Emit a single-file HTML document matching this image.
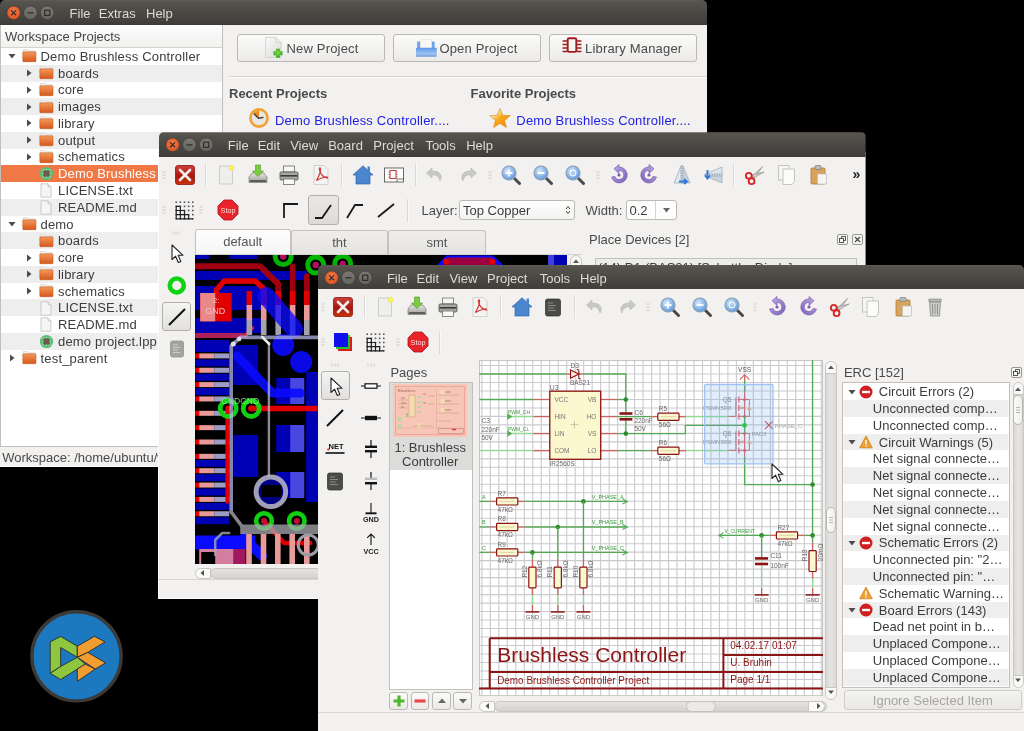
<!DOCTYPE html><html><head><meta charset="utf-8"><style>body{margin:0;width:1024px;height:731px;background:#000;overflow:hidden;position:relative;will-change:transform;font-family:"Liberation Sans",sans-serif}.r{position:absolute}.t{position:absolute;white-space:nowrap}.win{position:absolute;left:0;top:0;width:1024px;height:731px}.tb{background:linear-gradient(#5e5b53 0px,#55534c 2px,#4b4944 12px,#403f3b 23px,#3a3935 24.5px)}</style></head><body><svg class="r" style="left:28px;top:608px" width="97" height="97" viewBox="28 608 97 97"><circle cx="76.5" cy="656.3" r="44.6" fill="#1c79c0" stroke="#3c3a37" stroke-width="3.4"/><path d="M50.2 641.9 L60.7 636.4 L77.3 646.2 L77.3 657.3 L60.7 647.5 L60.7 666.5 L50.2 673.3z" fill="#8dc63f" stroke="#2a2a2a" stroke-width="0.9" stroke-linejoin="round"/><path d="M50.2 673.3 L60.7 666.5 L77.3 657.3 L85.3 664.1 L60.7 679.5z" fill="#8dc63f" stroke="#2a2a2a" stroke-width="0.9" stroke-linejoin="round"/><path d="M77.3 646.2 L94.5 636.4 L105 641.9 L87.8 652.4 L77.3 657.3z" fill="#f29d32" stroke="#2a2a2a" stroke-width="0.9" stroke-linejoin="round"/><path d="M77.3 657.3 L87.8 652.4 L105.6 662.9 L95.2 669 z" fill="#f29d32" stroke="#2a2a2a" stroke-width="0.9" stroke-linejoin="round"/><path d="M85.3 664.1 L95.2 669 L77.3 681.3 L77.3 669z" fill="#f29d32" stroke="#2a2a2a" stroke-width="0.9" stroke-linejoin="round"/></svg><div class="win" style="clip-path:inset(0px 317px 264px 0px);"><div class="r" style="left:0.00px;top:20.00px;width:707.00px;height:447.00px;background:#f2f1f0;"></div><div class="r" style="left:0.00px;top:466.00px;width:707.00px;height:1.00px;background:#fdfdfd;"></div><div class="r tb" style="left:0px;top:0px;width:707px;height:24.5px;border-radius:5px 5px 0 0"></div><svg class="r" style="left:0px;top:0px" width="60" height="25" viewBox="0 0 60 25"><defs><radialGradient id="cg" cx="50%" cy="40%" r="60%"><stop offset="0" stop-color="#f37c4f"/><stop offset="1" stop-color="#d9531e"/></radialGradient><linearGradient id="gg" x1="0" y1="0" x2="0" y2="1"><stop offset="0" stop-color="#7b7973"/><stop offset="1" stop-color="#65635d"/></linearGradient></defs><circle cx="13.6" cy="12.8" r="6.8" fill="url(#cg)" stroke="#3a3935" stroke-width="0.6"/><path d="M11.2 10.4 L16 15.2 M16 10.4 L11.2 15.2" stroke="#3b2a22" stroke-width="1.3"/><circle cx="30.4" cy="12.8" r="6.8" fill="url(#gg)" stroke="#3a3935" stroke-width="0.6"/><path d="M27.4 12.8 H33.4" stroke="#2f2e2b" stroke-width="1.3"/><circle cx="47.2" cy="12.8" r="6.8" fill="url(#gg)" stroke="#3a3935" stroke-width="0.6"/><rect x="44.6" y="10.2" width="5.2" height="5.2" fill="none" stroke="#2f2e2b" stroke-width="1.2"/></svg><div class="t" style="left:69.60px;top:6.60px;font-size:13px;line-height:13px;color:#dfdbd2;">File</div><div class="t" style="left:98.80px;top:6.60px;font-size:13px;line-height:13px;color:#dfdbd2;">Extras</div><div class="t" style="left:146.00px;top:6.60px;font-size:13px;line-height:13px;color:#dfdbd2;">Help</div><div class="r" style="left:0.00px;top:24.50px;width:223.00px;height:422.00px;background:#ffffff;box-sizing:border-box;border:1px solid #c3c0bb;border-top:none;"></div><div class="r" style="left:1.00px;top:25.00px;width:221.00px;height:22.00px;background:linear-gradient(#fdfdfd,#f1f1f0);border-bottom:1px solid #d5d3cf;"></div><div class="t" style="left:5.00px;top:30.00px;font-size:13px;line-height:13px;color:#454545;">Workspace Projects</div><svg class="r" style="left:6.5px;top:51.4px" width="10" height="10" viewBox="0 0 10 10"><path d="M1.5 3 H8.5 L5 7.5z" fill="#4c4c4c"/></svg><svg class="r" style="left:21.6px;top:49.4px" width="15" height="14" viewBox="0 0 15 14"><defs><linearGradient id="fo" x1="0" y1="0" x2="0" y2="1"><stop offset="0" stop-color="#f39a58"/><stop offset="1" stop-color="#d8561c"/></linearGradient></defs><path d="M1.2 0.6 h5 l1 1.2 h5.8 v3 H1.2z" fill="#f6f5f2" stroke="#cfcbc3" stroke-width="0.6"/><rect x="0.8" y="2.8" width="13.2" height="9.9" rx="0.7" fill="url(#fo)" stroke="#b9501d" stroke-width="0.5"/></svg><div class="t" style="left:40.50px;top:49.90px;font-size:13px;line-height:13px;color:#3c3c3c;letter-spacing:0.18px;">Demo Brushless Controller</div><div class="r" style="left:1.00px;top:64.76px;width:221.00px;height:16.76px;background:#eeeeee;"></div><svg class="r" style="left:24.0px;top:68.2px" width="10" height="10" viewBox="0 0 10 10"><path d="M3 1.5 V8.5 L7.5 5z" fill="#4c4c4c"/></svg><svg class="r" style="left:39.1px;top:66.2px" width="15" height="14" viewBox="0 0 15 14"><defs><linearGradient id="fo" x1="0" y1="0" x2="0" y2="1"><stop offset="0" stop-color="#f39a58"/><stop offset="1" stop-color="#d8561c"/></linearGradient></defs><path d="M1.2 0.6 h5 l1 1.2 h5.8 v3 H1.2z" fill="#f6f5f2" stroke="#cfcbc3" stroke-width="0.6"/><rect x="0.8" y="2.8" width="13.2" height="9.9" rx="0.7" fill="url(#fo)" stroke="#b9501d" stroke-width="0.5"/></svg><div class="t" style="left:58.00px;top:66.66px;font-size:13px;line-height:13px;color:#3c3c3c;letter-spacing:0.18px;">boards</div><svg class="r" style="left:24.0px;top:84.9px" width="10" height="10" viewBox="0 0 10 10"><path d="M3 1.5 V8.5 L7.5 5z" fill="#4c4c4c"/></svg><svg class="r" style="left:39.1px;top:82.9px" width="15" height="14" viewBox="0 0 15 14"><defs><linearGradient id="fo" x1="0" y1="0" x2="0" y2="1"><stop offset="0" stop-color="#f39a58"/><stop offset="1" stop-color="#d8561c"/></linearGradient></defs><path d="M1.2 0.6 h5 l1 1.2 h5.8 v3 H1.2z" fill="#f6f5f2" stroke="#cfcbc3" stroke-width="0.6"/><rect x="0.8" y="2.8" width="13.2" height="9.9" rx="0.7" fill="url(#fo)" stroke="#b9501d" stroke-width="0.5"/></svg><div class="t" style="left:58.00px;top:83.42px;font-size:13px;line-height:13px;color:#3c3c3c;letter-spacing:0.18px;">core</div><div class="r" style="left:1.00px;top:98.28px;width:221.00px;height:16.76px;background:#eeeeee;"></div><svg class="r" style="left:24.0px;top:101.7px" width="10" height="10" viewBox="0 0 10 10"><path d="M3 1.5 V8.5 L7.5 5z" fill="#4c4c4c"/></svg><svg class="r" style="left:39.1px;top:99.7px" width="15" height="14" viewBox="0 0 15 14"><defs><linearGradient id="fo" x1="0" y1="0" x2="0" y2="1"><stop offset="0" stop-color="#f39a58"/><stop offset="1" stop-color="#d8561c"/></linearGradient></defs><path d="M1.2 0.6 h5 l1 1.2 h5.8 v3 H1.2z" fill="#f6f5f2" stroke="#cfcbc3" stroke-width="0.6"/><rect x="0.8" y="2.8" width="13.2" height="9.9" rx="0.7" fill="url(#fo)" stroke="#b9501d" stroke-width="0.5"/></svg><div class="t" style="left:58.00px;top:100.18px;font-size:13px;line-height:13px;color:#3c3c3c;letter-spacing:0.18px;">images</div><svg class="r" style="left:24.0px;top:118.4px" width="10" height="10" viewBox="0 0 10 10"><path d="M3 1.5 V8.5 L7.5 5z" fill="#4c4c4c"/></svg><svg class="r" style="left:39.1px;top:116.4px" width="15" height="14" viewBox="0 0 15 14"><defs><linearGradient id="fo" x1="0" y1="0" x2="0" y2="1"><stop offset="0" stop-color="#f39a58"/><stop offset="1" stop-color="#d8561c"/></linearGradient></defs><path d="M1.2 0.6 h5 l1 1.2 h5.8 v3 H1.2z" fill="#f6f5f2" stroke="#cfcbc3" stroke-width="0.6"/><rect x="0.8" y="2.8" width="13.2" height="9.9" rx="0.7" fill="url(#fo)" stroke="#b9501d" stroke-width="0.5"/></svg><div class="t" style="left:58.00px;top:116.94px;font-size:13px;line-height:13px;color:#3c3c3c;letter-spacing:0.18px;">library</div><div class="r" style="left:1.00px;top:131.80px;width:221.00px;height:16.76px;background:#eeeeee;"></div><svg class="r" style="left:24.0px;top:135.2px" width="10" height="10" viewBox="0 0 10 10"><path d="M3 1.5 V8.5 L7.5 5z" fill="#4c4c4c"/></svg><svg class="r" style="left:39.1px;top:133.2px" width="15" height="14" viewBox="0 0 15 14"><defs><linearGradient id="fo" x1="0" y1="0" x2="0" y2="1"><stop offset="0" stop-color="#f39a58"/><stop offset="1" stop-color="#d8561c"/></linearGradient></defs><path d="M1.2 0.6 h5 l1 1.2 h5.8 v3 H1.2z" fill="#f6f5f2" stroke="#cfcbc3" stroke-width="0.6"/><rect x="0.8" y="2.8" width="13.2" height="9.9" rx="0.7" fill="url(#fo)" stroke="#b9501d" stroke-width="0.5"/></svg><div class="t" style="left:58.00px;top:133.70px;font-size:13px;line-height:13px;color:#3c3c3c;letter-spacing:0.18px;">output</div><svg class="r" style="left:24.0px;top:152.0px" width="10" height="10" viewBox="0 0 10 10"><path d="M3 1.5 V8.5 L7.5 5z" fill="#4c4c4c"/></svg><svg class="r" style="left:39.1px;top:150.0px" width="15" height="14" viewBox="0 0 15 14"><defs><linearGradient id="fo" x1="0" y1="0" x2="0" y2="1"><stop offset="0" stop-color="#f39a58"/><stop offset="1" stop-color="#d8561c"/></linearGradient></defs><path d="M1.2 0.6 h5 l1 1.2 h5.8 v3 H1.2z" fill="#f6f5f2" stroke="#cfcbc3" stroke-width="0.6"/><rect x="0.8" y="2.8" width="13.2" height="9.9" rx="0.7" fill="url(#fo)" stroke="#b9501d" stroke-width="0.5"/></svg><div class="t" style="left:58.00px;top:150.46px;font-size:13px;line-height:13px;color:#3c3c3c;letter-spacing:0.18px;">schematics</div><div class="r" style="left:1.00px;top:165.32px;width:221.00px;height:16.76px;background:#f07746;"></div><svg class="r" style="left:38.8px;top:166.2px" width="15" height="15" viewBox="0 0 15 15"><circle cx="7.5" cy="7.5" r="6.6" fill="#55bf72"/><rect x="4.3" y="4.3" width="6.4" height="6.4" fill="#6e5a4e"/><path d="M4.8 3 v1.3 M7.5 3 v1.3 M10.2 3 v1.3 M4.8 10.7 v1.3 M7.5 10.7 v1.3 M10.2 10.7 v1.3 M3 4.8 h1.3 M3 7.5 h1.3 M3 10.2 h1.3 M10.7 4.8 h1.3 M10.7 7.5 h1.3 M10.7 10.2 h1.3" stroke="#bfe9cf" stroke-width="0.8"/></svg><div class="t" style="left:58.00px;top:167.22px;font-size:13px;line-height:13px;color:#ffffff;letter-spacing:0.18px;">Demo Brushless Controller.lpp</div><svg class="r" style="left:39.3px;top:183.3px" width="14" height="15" viewBox="0 0 14 15"><path d="M2 0.8 h7 l3 3 v10.4 H2z" fill="#f5f5f4" stroke="#b9b7b2" stroke-width="0.7"/><path d="M9 0.8 v3 h3" fill="#e4e3e0" stroke="#b9b7b2" stroke-width="0.6"/></svg><div class="t" style="left:58.00px;top:183.98px;font-size:13px;line-height:13px;color:#3c3c3c;letter-spacing:0.18px;">LICENSE.txt</div><div class="r" style="left:1.00px;top:198.84px;width:221.00px;height:16.76px;background:#eeeeee;"></div><svg class="r" style="left:39.3px;top:200.0px" width="14" height="15" viewBox="0 0 14 15"><path d="M2 0.8 h7 l3 3 v10.4 H2z" fill="#f5f5f4" stroke="#b9b7b2" stroke-width="0.7"/><path d="M9 0.8 v3 h3" fill="#e4e3e0" stroke="#b9b7b2" stroke-width="0.6"/></svg><div class="t" style="left:58.00px;top:200.74px;font-size:13px;line-height:13px;color:#3c3c3c;letter-spacing:0.18px;">README.md</div><svg class="r" style="left:6.5px;top:219.0px" width="10" height="10" viewBox="0 0 10 10"><path d="M1.5 3 H8.5 L5 7.5z" fill="#4c4c4c"/></svg><svg class="r" style="left:21.6px;top:217.0px" width="15" height="14" viewBox="0 0 15 14"><defs><linearGradient id="fo" x1="0" y1="0" x2="0" y2="1"><stop offset="0" stop-color="#f39a58"/><stop offset="1" stop-color="#d8561c"/></linearGradient></defs><path d="M1.2 0.6 h5 l1 1.2 h5.8 v3 H1.2z" fill="#f6f5f2" stroke="#cfcbc3" stroke-width="0.6"/><rect x="0.8" y="2.8" width="13.2" height="9.9" rx="0.7" fill="url(#fo)" stroke="#b9501d" stroke-width="0.5"/></svg><div class="t" style="left:40.50px;top:217.50px;font-size:13px;line-height:13px;color:#3c3c3c;letter-spacing:0.18px;">demo</div><div class="r" style="left:1.00px;top:232.36px;width:221.00px;height:16.76px;background:#eeeeee;"></div><svg class="r" style="left:39.1px;top:233.8px" width="15" height="14" viewBox="0 0 15 14"><defs><linearGradient id="fo" x1="0" y1="0" x2="0" y2="1"><stop offset="0" stop-color="#f39a58"/><stop offset="1" stop-color="#d8561c"/></linearGradient></defs><path d="M1.2 0.6 h5 l1 1.2 h5.8 v3 H1.2z" fill="#f6f5f2" stroke="#cfcbc3" stroke-width="0.6"/><rect x="0.8" y="2.8" width="13.2" height="9.9" rx="0.7" fill="url(#fo)" stroke="#b9501d" stroke-width="0.5"/></svg><div class="t" style="left:58.00px;top:234.26px;font-size:13px;line-height:13px;color:#3c3c3c;letter-spacing:0.18px;">boards</div><svg class="r" style="left:24.0px;top:252.5px" width="10" height="10" viewBox="0 0 10 10"><path d="M3 1.5 V8.5 L7.5 5z" fill="#4c4c4c"/></svg><svg class="r" style="left:39.1px;top:250.5px" width="15" height="14" viewBox="0 0 15 14"><defs><linearGradient id="fo" x1="0" y1="0" x2="0" y2="1"><stop offset="0" stop-color="#f39a58"/><stop offset="1" stop-color="#d8561c"/></linearGradient></defs><path d="M1.2 0.6 h5 l1 1.2 h5.8 v3 H1.2z" fill="#f6f5f2" stroke="#cfcbc3" stroke-width="0.6"/><rect x="0.8" y="2.8" width="13.2" height="9.9" rx="0.7" fill="url(#fo)" stroke="#b9501d" stroke-width="0.5"/></svg><div class="t" style="left:58.00px;top:251.02px;font-size:13px;line-height:13px;color:#3c3c3c;letter-spacing:0.18px;">core</div><div class="r" style="left:1.00px;top:265.88px;width:221.00px;height:16.76px;background:#eeeeee;"></div><svg class="r" style="left:24.0px;top:269.3px" width="10" height="10" viewBox="0 0 10 10"><path d="M3 1.5 V8.5 L7.5 5z" fill="#4c4c4c"/></svg><svg class="r" style="left:39.1px;top:267.3px" width="15" height="14" viewBox="0 0 15 14"><defs><linearGradient id="fo" x1="0" y1="0" x2="0" y2="1"><stop offset="0" stop-color="#f39a58"/><stop offset="1" stop-color="#d8561c"/></linearGradient></defs><path d="M1.2 0.6 h5 l1 1.2 h5.8 v3 H1.2z" fill="#f6f5f2" stroke="#cfcbc3" stroke-width="0.6"/><rect x="0.8" y="2.8" width="13.2" height="9.9" rx="0.7" fill="url(#fo)" stroke="#b9501d" stroke-width="0.5"/></svg><div class="t" style="left:58.00px;top:267.78px;font-size:13px;line-height:13px;color:#3c3c3c;letter-spacing:0.18px;">library</div><svg class="r" style="left:24.0px;top:286.0px" width="10" height="10" viewBox="0 0 10 10"><path d="M3 1.5 V8.5 L7.5 5z" fill="#4c4c4c"/></svg><svg class="r" style="left:39.1px;top:284.0px" width="15" height="14" viewBox="0 0 15 14"><defs><linearGradient id="fo" x1="0" y1="0" x2="0" y2="1"><stop offset="0" stop-color="#f39a58"/><stop offset="1" stop-color="#d8561c"/></linearGradient></defs><path d="M1.2 0.6 h5 l1 1.2 h5.8 v3 H1.2z" fill="#f6f5f2" stroke="#cfcbc3" stroke-width="0.6"/><rect x="0.8" y="2.8" width="13.2" height="9.9" rx="0.7" fill="url(#fo)" stroke="#b9501d" stroke-width="0.5"/></svg><div class="t" style="left:58.00px;top:284.54px;font-size:13px;line-height:13px;color:#3c3c3c;letter-spacing:0.18px;">schematics</div><div class="r" style="left:1.00px;top:299.40px;width:221.00px;height:16.76px;background:#eeeeee;"></div><svg class="r" style="left:39.3px;top:300.6px" width="14" height="15" viewBox="0 0 14 15"><path d="M2 0.8 h7 l3 3 v10.4 H2z" fill="#f5f5f4" stroke="#b9b7b2" stroke-width="0.7"/><path d="M9 0.8 v3 h3" fill="#e4e3e0" stroke="#b9b7b2" stroke-width="0.6"/></svg><div class="t" style="left:58.00px;top:301.30px;font-size:13px;line-height:13px;color:#3c3c3c;letter-spacing:0.18px;">LICENSE.txt</div><svg class="r" style="left:39.3px;top:317.4px" width="14" height="15" viewBox="0 0 14 15"><path d="M2 0.8 h7 l3 3 v10.4 H2z" fill="#f5f5f4" stroke="#b9b7b2" stroke-width="0.7"/><path d="M9 0.8 v3 h3" fill="#e4e3e0" stroke="#b9b7b2" stroke-width="0.6"/></svg><div class="t" style="left:58.00px;top:318.06px;font-size:13px;line-height:13px;color:#3c3c3c;letter-spacing:0.18px;">README.md</div><div class="r" style="left:1.00px;top:332.92px;width:221.00px;height:16.76px;background:#eeeeee;"></div><svg class="r" style="left:38.8px;top:333.8px" width="15" height="15" viewBox="0 0 15 15"><circle cx="7.5" cy="7.5" r="6.6" fill="#55bf72"/><rect x="4.3" y="4.3" width="6.4" height="6.4" fill="#6e5a4e"/><path d="M4.8 3 v1.3 M7.5 3 v1.3 M10.2 3 v1.3 M4.8 10.7 v1.3 M7.5 10.7 v1.3 M10.2 10.7 v1.3 M3 4.8 h1.3 M3 7.5 h1.3 M3 10.2 h1.3 M10.7 4.8 h1.3 M10.7 7.5 h1.3 M10.7 10.2 h1.3" stroke="#bfe9cf" stroke-width="0.8"/></svg><div class="t" style="left:58.00px;top:334.82px;font-size:13px;line-height:13px;color:#3c3c3c;letter-spacing:0.18px;">demo project.lpp</div><svg class="r" style="left:6.5px;top:353.1px" width="10" height="10" viewBox="0 0 10 10"><path d="M3 1.5 V8.5 L7.5 5z" fill="#4c4c4c"/></svg><svg class="r" style="left:21.6px;top:351.1px" width="15" height="14" viewBox="0 0 15 14"><defs><linearGradient id="fo" x1="0" y1="0" x2="0" y2="1"><stop offset="0" stop-color="#f39a58"/><stop offset="1" stop-color="#d8561c"/></linearGradient></defs><path d="M1.2 0.6 h5 l1 1.2 h5.8 v3 H1.2z" fill="#f6f5f2" stroke="#cfcbc3" stroke-width="0.6"/><rect x="0.8" y="2.8" width="13.2" height="9.9" rx="0.7" fill="url(#fo)" stroke="#b9501d" stroke-width="0.5"/></svg><div class="t" style="left:40.50px;top:351.58px;font-size:13px;line-height:13px;color:#3c3c3c;letter-spacing:0.18px;">test_parent</div><div class="t" style="left:2.20px;top:450.60px;font-size:13px;line-height:13px;color:#4a4a4a;">Workspace: /home/ubuntu/workspace</div><div class="r" style="left:237.30px;top:33.50px;width:146.20px;height:26.20px;border:1px solid #bcb9b3;border-radius:3px;background:linear-gradient(#fbfbfa,#ebeae8);"></div><div class="t" style="left:286.50px;top:42.10px;font-size:13px;line-height:13px;color:#4a4a4a;letter-spacing:0.18px;">New Project</div><div class="r" style="left:393.20px;top:33.50px;width:146.20px;height:26.20px;border:1px solid #bcb9b3;border-radius:3px;background:linear-gradient(#fbfbfa,#ebeae8);"></div><div class="t" style="left:439.40px;top:42.10px;font-size:13px;line-height:13px;color:#4a4a4a;letter-spacing:0.18px;">Open Project</div><div class="r" style="left:549.00px;top:33.50px;width:146.20px;height:26.20px;border:1px solid #bcb9b3;border-radius:3px;background:linear-gradient(#fbfbfa,#ebeae8);"></div><div class="t" style="left:585.00px;top:42.10px;font-size:13px;line-height:13px;color:#4a4a4a;letter-spacing:0.18px;">Library Manager</div><div class="r" style="left:229.00px;top:76.20px;width:478.00px;height:1.00px;background:#d4d2ce;"></div><div class="r" style="left:229.00px;top:77.20px;width:478.00px;height:1.00px;background:#fbfbfa;"></div><svg class="r" style="left:262.50px;top:33.80px" width="22" height="27" viewBox="0 0 22 27"><defs><linearGradient id="ic_np" x1="0" y1="0" x2="1" y2="1"><stop offset="0" stop-color="#fafafa"/><stop offset="1" stop-color="#d9d9d7"/></linearGradient><radialGradient id="ic_gp" cx="50%" cy="45%" r="55%"><stop offset="0" stop-color="#7ee050"/><stop offset="1" stop-color="#3aa51c"/></radialGradient></defs><path d="M2.6 3.4 H13 L18.1 8.4 V23.5 H2.6z" fill="url(#ic_np)" stroke="#c8c8c5" stroke-width="0.7"/><path d="M13 3.4 V8.4 H18.1" fill="#ececea" stroke="#c2c2bf" stroke-width="0.6"/><path d="M13 14.7 H17 V17.2 H19.5 V21.2 H17 V23.7 H13 V21.2 H10.5 V17.2 H13z" fill="url(#ic_gp)"/></svg><svg class="r" style="left:414.50px;top:36.80px" width="22" height="22" viewBox="0 0 22 22"><defs><linearGradient id="ic_op" x1="0" y1="0" x2="0" y2="1"><stop offset="0" stop-color="#5d98e8"/><stop offset="0.7" stop-color="#9cc4f4"/><stop offset="1" stop-color="#6a9ad8"/></linearGradient></defs><rect x="2.1" y="4.6" width="3.2" height="10" rx="1" fill="#6ea3ea"/><rect x="16.4" y="4.6" width="3.2" height="10" rx="1" fill="#6ea3ea"/><rect x="5.5" y="2.6" width="11" height="9" fill="#f7f7f6" stroke="#dedede" stroke-width="0.5"/><rect x="1" y="10.7" width="20.8" height="9" rx="1" fill="url(#ic_op)"/></svg><svg class="r" style="left:561.20px;top:36.20px" width="22" height="22" viewBox="0 0 22 22"><rect x="6.7" y="2.3" width="8.6" height="13.6" rx="1.3" fill="#f5f5f4" stroke="#a01c1c" stroke-width="1.9"/><path d="M1.5 5 H6 M1.5 8.5 H6 M1.5 12 H6 M1.5 15.4 H6 M16 5 H20.5 M16 8.5 H20.5 M16 12 H20.5 M16 15.4 H20.5" stroke="#a01c1c" stroke-width="1.5"/></svg><svg class="r" style="left:247.70px;top:107.40px" width="22" height="22" viewBox="0 0 22 22"><circle cx="11" cy="11" r="8.6" fill="#e7e7e3" stroke="#f2a235" stroke-width="2.6"/><path d="M11 11 L11 3.8 A7.2 7.2 0 0 0 5.6 6.1z" fill="#f58a1a"/><path d="M5.8 6.6 L10.5 11.3 L15.6 10.4" fill="none" stroke="#3e3e3c" stroke-width="1.4" stroke-linejoin="round"/></svg><svg class="r" style="left:489.40px;top:108.40px" width="22" height="22" viewBox="0 0 22 22"><defs><linearGradient id="ic_st" x1="0.2" y1="0.2" x2="0.8" y2="0.9"><stop offset="0" stop-color="#fff4c8"/><stop offset="0.45" stop-color="#f9a81a"/><stop offset="1" stop-color="#f08a10"/></linearGradient></defs><path d="M11 0.4 L13.9 7.3 L21.3 7.6 L15.6 12.4 L17.5 19.6 L11 15.5 L4.5 19.6 L6.4 12.4 L0.7 7.6 L8.1 7.3z" fill="url(#ic_st)" stroke="#d98b2a" stroke-width="0.6" stroke-linejoin="round"/></svg><div class="t" style="left:229.00px;top:86.60px;font-size:13px;line-height:13px;color:#4a4a4a;font-weight:bold;">Recent Projects</div><div class="t" style="left:470.60px;top:86.60px;font-size:13px;line-height:13px;color:#4a4a4a;font-weight:bold;">Favorite Projects</div><div class="t" style="left:275.00px;top:113.60px;font-size:13px;line-height:13px;color:#2121e6;letter-spacing:0.19px;">Demo Brushless Controller....</div><div class="t" style="left:516.30px;top:113.60px;font-size:13px;line-height:13px;color:#2121e6;letter-spacing:0.19px;">Demo Brushless Controller....</div></div><div class="win" style="clip-path:inset(132.2px 158.39999999999998px 132px 158px);"><div class="r" style="left:158.00px;top:152.20px;width:707.60px;height:446.80px;background:#f2f1f0;"></div><div class="r" style="left:158.00px;top:156.00px;width:1.00px;height:443.00px;background:#fdfdfd;"></div><div class="r" style="left:158.00px;top:598.00px;width:707.60px;height:1.00px;background:#fdfdfd;"></div><div class="r tb" style="left:159px;top:132.2px;width:706.6px;height:24.5px;border-radius:5px 5px 0 0"></div><svg class="r" style="left:159px;top:132.2px" width="60" height="25" viewBox="0 0 60 25"><defs><radialGradient id="cg" cx="50%" cy="40%" r="60%"><stop offset="0" stop-color="#f37c4f"/><stop offset="1" stop-color="#d9531e"/></radialGradient><linearGradient id="gg" x1="0" y1="0" x2="0" y2="1"><stop offset="0" stop-color="#7b7973"/><stop offset="1" stop-color="#65635d"/></linearGradient></defs><circle cx="13.6" cy="12.8" r="6.8" fill="url(#cg)" stroke="#3a3935" stroke-width="0.6"/><path d="M11.2 10.4 L16 15.2 M16 10.4 L11.2 15.2" stroke="#3b2a22" stroke-width="1.3"/><circle cx="30.4" cy="12.8" r="6.8" fill="url(#gg)" stroke="#3a3935" stroke-width="0.6"/><path d="M27.4 12.8 H33.4" stroke="#2f2e2b" stroke-width="1.3"/><circle cx="47.2" cy="12.8" r="6.8" fill="url(#gg)" stroke="#3a3935" stroke-width="0.6"/><rect x="44.6" y="10.2" width="5.2" height="5.2" fill="none" stroke="#2f2e2b" stroke-width="1.2"/></svg><div class="t" style="left:227.70px;top:138.80px;font-size:13px;line-height:13px;color:#dfdbd2;">File</div><div class="t" style="left:257.70px;top:138.80px;font-size:13px;line-height:13px;color:#dfdbd2;">Edit</div><div class="t" style="left:290.20px;top:138.80px;font-size:13px;line-height:13px;color:#dfdbd2;">View</div><div class="t" style="left:328.20px;top:138.80px;font-size:13px;line-height:13px;color:#dfdbd2;">Board</div><div class="t" style="left:373.30px;top:138.80px;font-size:13px;line-height:13px;color:#dfdbd2;">Project</div><div class="t" style="left:425.40px;top:138.80px;font-size:13px;line-height:13px;color:#dfdbd2;">Tools</div><div class="t" style="left:466.20px;top:138.80px;font-size:13px;line-height:13px;color:#dfdbd2;">Help</div><svg class="r" style="left:161.50px;top:169.50px" width="4" height="10"><path d="M0.5 2 H3.5 M0.5 5 H3.5 M0.5 8 H3.5" stroke="#c9c7c3" stroke-width="0.9"/></svg><svg class="r" style="left:173.60px;top:163.50px" width="22" height="22" viewBox="0 0 22 22"><defs><linearGradient id="ic_close" x1="0" y1="0" x2="0" y2="1"><stop offset="0" stop-color="#d0413c"/><stop offset="0.55" stop-color="#a8150f"/><stop offset="1" stop-color="#c8350a"/></linearGradient></defs><rect x="1.5" y="1.5" width="19" height="19" rx="2.5" fill="url(#ic_close)" stroke="#8a1410" stroke-width="0.8"/><path d="M6 6 L16 16 M16 6 L6 16" stroke="#f4f0ee" stroke-width="2.6" stroke-linecap="round"/></svg><div class="r" style="left:205.10px;top:163.00px;width:1px;height:23.00px;background:#dcdad6;box-shadow:1px 0 0 #fafaf9"></div><svg class="r" style="left:214.90px;top:163.50px" width="22" height="22" viewBox="0 0 22 22"><path d="M4.5 2 H15 L17.5 4.5 V20 H4.5z" fill="#eeeeec" stroke="#c4c4c0" stroke-width="0.8"/><circle cx="16.5" cy="3.8" r="2.6" fill="#f7f36a" stroke="#e8df3a" stroke-width="0.5"/></svg><svg class="r" style="left:247.00px;top:163.50px" width="22" height="22" viewBox="0 0 22 22"><defs><linearGradient id="ic_sv" x1="0" y1="0" x2="0" y2="1"><stop offset="0" stop-color="#e6e6e4"/><stop offset="1" stop-color="#9a9a96"/></linearGradient></defs><path d="M2 13 L5 9 H17 L20 13 V18.5 H2z" fill="url(#ic_sv)" stroke="#7b7b77" stroke-width="0.7"/><rect x="3" y="16" width="16" height="2" fill="#5d5d5a"/><path d="M8.5 1 H13.5 V7 H16.5 L11 12.5 L5.5 7 H8.5z" fill="#7cc943" stroke="#4e9a1f" stroke-width="0.6"/></svg><svg class="r" style="left:278.30px;top:163.50px" width="22" height="22" viewBox="0 0 22 22"><rect x="5.5" y="2" width="11" height="6" fill="#f6f6f5" stroke="#6e6e6b" stroke-width="0.8"/><rect x="2" y="8" width="18" height="8" rx="1.2" fill="#a7a7a4" stroke="#4d4d4a" stroke-width="0.8"/><rect x="2.5" y="11" width="17" height="1.6" fill="#3b3b39"/><rect x="5.5" y="15" width="11" height="5.5" fill="#f8f8f7" stroke="#6e6e6b" stroke-width="0.8"/></svg><svg class="r" style="left:310.00px;top:163.50px" width="22" height="22" viewBox="0 0 22 22"><path d="M4 1.5 H14 L18 5.5 V20.5 H4z" fill="#f3f3f2" stroke="#c9c9c6" stroke-width="0.8"/><path d="M6.5 16.5 C9 12 11 7 10.5 4.5 C10 3 9 4 9.5 6 C10.5 10 13 13 17 14 C18.5 14.3 17.5 12.8 16 13 C12 13.5 8 15.5 6.5 16.5z" fill="none" stroke="#d43b3b" stroke-width="1.2"/></svg><div class="r" style="left:341.10px;top:163.00px;width:1px;height:23.00px;background:#dcdad6;box-shadow:1px 0 0 #fafaf9"></div><svg class="r" style="left:351.60px;top:163.50px" width="22" height="22" viewBox="0 0 22 22"><path d="M11 1.8 L21 11 H18 V20 H4 V11 H1z" fill="#4a86cf" stroke="#2f66ad" stroke-width="0.7"/><rect x="15.5" y="2.5" width="2.5" height="5" fill="#4a86cf"/></svg><svg class="r" style="left:383.30px;top:163.50px" width="22" height="22" viewBox="0 0 22 22"><rect x="1.5" y="4" width="19" height="14" fill="#fdfdfd" stroke="#5b5b58" stroke-width="0.9"/><rect x="7" y="6.5" width="6" height="8" fill="none" stroke="#c23a3a" stroke-width="1"/><path d="M5.5 8h1.5M5.5 10.5h1.5M5.5 13h1.5M13 8h1.5M13 10.5h1.5M13 13h1.5" stroke="#c23a3a" stroke-width="0.8"/><path d="M14 18 V15 H20.5" fill="none" stroke="#5b5b58" stroke-width="0.8"/></svg><div class="r" style="left:415.40px;top:163.00px;width:1px;height:23.00px;background:#dcdad6;box-shadow:1px 0 0 #fafaf9"></div><svg class="r" style="left:424.40px;top:163.50px" width="22" height="22" viewBox="0 0 22 22"><path d="M8 4 L2.5 9 L8 14 V11 C12 10.5 15 12 16 17 C19 12 16.5 7 8 7z" fill="#c8c8c6" stroke="#b5b5b2" stroke-width="0.6"/></svg><svg class="r" style="left:456.90px;top:163.50px" width="22" height="22" viewBox="0 0 22 22"><path d="M14 4 L19.5 9 L14 14 V11 C10 10.5 7 12 6 17 C3 12 5.5 7 14 7z" fill="#c8c8c6" stroke="#b5b5b2" stroke-width="0.6"/></svg><svg class="r" style="left:488.00px;top:169.50px" width="4" height="10"><path d="M0.5 2 H3.5 M0.5 5 H3.5 M0.5 8 H3.5" stroke="#c9c7c3" stroke-width="0.9"/></svg><svg class="r" style="left:500.00px;top:163.50px" width="22" height="22" viewBox="0 0 22 22"><defs><radialGradient id="ic_zm" cx="40%" cy="35%" r="65%"><stop offset="0" stop-color="#d7e9fb"/><stop offset="1" stop-color="#5d9ae0"/></radialGradient></defs><path d="M13.5 13.5 L19.5 19.5" stroke="#4a4a48" stroke-width="3" stroke-linecap="round"/><circle cx="9" cy="9" r="7" fill="url(#ic_zm)" stroke="#8a9fb5" stroke-width="1.2"/><path d="M5.5 9 H12.5 M9 5.5 V12.5" stroke="#fff" stroke-width="1.8"/></svg><svg class="r" style="left:531.80px;top:163.50px" width="22" height="22" viewBox="0 0 22 22"><defs><radialGradient id="ic_zm" cx="40%" cy="35%" r="65%"><stop offset="0" stop-color="#d7e9fb"/><stop offset="1" stop-color="#5d9ae0"/></radialGradient></defs><path d="M13.5 13.5 L19.5 19.5" stroke="#4a4a48" stroke-width="3" stroke-linecap="round"/><circle cx="9" cy="9" r="7" fill="url(#ic_zm)" stroke="#8a9fb5" stroke-width="1.2"/><path d="M5.5 9 H12.5" stroke="#fff" stroke-width="1.8"/></svg><svg class="r" style="left:563.60px;top:163.50px" width="22" height="22" viewBox="0 0 22 22"><defs><radialGradient id="ic_zm" cx="40%" cy="35%" r="65%"><stop offset="0" stop-color="#d7e9fb"/><stop offset="1" stop-color="#5d9ae0"/></radialGradient></defs><path d="M13.5 13.5 L19.5 19.5" stroke="#4a4a48" stroke-width="3" stroke-linecap="round"/><circle cx="9" cy="9" r="7" fill="url(#ic_zm)" stroke="#8a9fb5" stroke-width="1.2"/><path d="M5.5 9 H12.5 M9 5.5 V12.5" stroke="#a9c8ec" stroke-width="1"/><circle cx="9" cy="9" r="3" fill="none" stroke="#fff" stroke-width="1"/></svg><svg class="r" style="left:595.80px;top:169.50px" width="4" height="10"><path d="M0.5 2 H3.5 M0.5 5 H3.5 M0.5 8 H3.5" stroke="#c9c7c3" stroke-width="0.9"/></svg><svg class="r" style="left:607.50px;top:163.50px" width="22" height="22" viewBox="0 0 22 22"><defs><linearGradient id="ic_rt" x1="0" y1="0" x2="1" y2="1"><stop offset="0" stop-color="#c2b0e6"/><stop offset="1" stop-color="#7a5fb8"/></linearGradient></defs><path d="M11 3 A8 8 0 1 1 3.5 13 L7 12.5 A4.5 4.5 0 1 0 11 6.5 V9.5 L6 4.8 L11 0.5z" fill="url(#ic_rt)" stroke="#6d56a8" stroke-width="0.6"/><circle cx="11" cy="11" r="1.6" fill="#7a5fb8"/></svg><svg class="r" style="left:637.80px;top:163.50px" width="22" height="22" viewBox="0 0 22 22"><defs><linearGradient id="ic_rt2" x1="1" y1="0" x2="0" y2="1"><stop offset="0" stop-color="#c2b0e6"/><stop offset="1" stop-color="#7a5fb8"/></linearGradient></defs><path d="M11 3 A8 8 0 1 0 18.5 13 L15 12.5 A4.5 4.5 0 1 1 11 6.5 V9.5 L16 4.8 L11 0.5z" fill="url(#ic_rt2)" stroke="#6d56a8" stroke-width="0.6"/><circle cx="11" cy="11" r="1.6" fill="#7a5fb8"/></svg><svg class="r" style="left:670.50px;top:163.50px" width="22" height="22" viewBox="0 0 22 22"><path d="M10 2 L3 19 H10z" fill="#dfe6ee" stroke="#9aa6b3" stroke-width="0.7"/><path d="M12 2 L19 19 H12z" fill="#c8d3df" stroke="#9aa6b3" stroke-width="0.7"/><path d="M11 1 V20" stroke="#5f7fa8" stroke-width="0.8" stroke-dasharray="1.5 1"/><path d="M8 17.5 H15 M13 15 L16 17.5 L13 20" stroke="#2f7ad6" stroke-width="1.8" fill="none"/></svg><svg class="r" style="left:702.50px;top:163.50px" width="22" height="22" viewBox="0 0 22 22"><path d="M2 10 L19 3 V10z" fill="#dfe6ee" stroke="#9aa6b3" stroke-width="0.7"/><path d="M2 12 L19 19 V12z" fill="#c8d3df" stroke="#9aa6b3" stroke-width="0.7"/><path d="M1 11 H21" stroke="#5f7fa8" stroke-width="0.8" stroke-dasharray="1.5 1"/><path d="M4.5 6 V14 M2 11.5 L4.5 14.5 L7 11.5" stroke="#2f7ad6" stroke-width="1.8" fill="none"/></svg><div class="r" style="left:733.00px;top:163.00px;width:1px;height:23.00px;background:#dcdad6;box-shadow:1px 0 0 #fafaf9"></div><svg class="r" style="left:743.30px;top:163.50px" width="22" height="22" viewBox="0 0 22 22"><path d="M8.5 13 L19.5 2.5 L11 14.5z" fill="#c9c9c6" stroke="#8c8c89" stroke-width="0.7"/><path d="M9.5 11 L21 8 L10.5 14z" fill="#d6d6d3" stroke="#8c8c89" stroke-width="0.7"/><circle cx="5.8" cy="11.8" r="2.9" fill="none" stroke="#d62828" stroke-width="1.9"/><circle cx="8.6" cy="17.2" r="2.9" fill="none" stroke="#d62828" stroke-width="1.9"/></svg><svg class="r" style="left:775.70px;top:163.50px" width="22" height="22" viewBox="0 0 22 22"><path d="M2.5 1.5 H13 V16 H2.5z" fill="#f5f5f4" stroke="#b8b8b5" stroke-width="0.8"/><path d="M7 5 H18.5 V17.5 L16 20.5 H7z" fill="#fbfbfa" stroke="#b8b8b5" stroke-width="0.8"/></svg><svg class="r" style="left:808.00px;top:163.50px" width="22" height="22" viewBox="0 0 22 22"><rect x="3" y="4" width="14" height="16" rx="1" fill="#d9a35b" stroke="#a9793a" stroke-width="0.8"/><rect x="7" y="1.5" width="6" height="4" rx="1" fill="#b9b9b6" stroke="#7c7c79" stroke-width="0.7"/><rect x="9.5" y="10" width="9" height="10" fill="#f4f4f3" stroke="#bdbdba" stroke-width="0.7"/></svg><div class="t" style="left:852.50px;top:167.15px;font-size:14px;line-height:14px;color:#222;font-weight:bold;">&#187;</div><svg class="r" style="left:161.50px;top:204.80px" width="4" height="10"><path d="M0.5 2 H3.5 M0.5 5 H3.5 M0.5 8 H3.5" stroke="#c9c7c3" stroke-width="0.9"/></svg><svg class="r" style="left:172.60px;top:198.80px" width="22" height="22" viewBox="0 0 22 22"><g fill="#555"><rect x="2.40" y="2.40" width="1.6" height="1.6"/><rect x="2.40" y="6.55" width="1.6" height="1.6"/><rect x="2.40" y="10.70" width="1.6" height="1.6"/><rect x="2.40" y="14.85" width="1.6" height="1.6"/><rect x="2.40" y="19.00" width="1.6" height="1.6"/><rect x="6.55" y="2.40" width="1.6" height="1.6"/><rect x="6.55" y="6.55" width="1.6" height="1.6"/><rect x="6.55" y="10.70" width="1.6" height="1.6"/><rect x="6.55" y="14.85" width="1.6" height="1.6"/><rect x="6.55" y="19.00" width="1.6" height="1.6"/><rect x="10.70" y="2.40" width="1.6" height="1.6"/><rect x="10.70" y="6.55" width="1.6" height="1.6"/><rect x="10.70" y="10.70" width="1.6" height="1.6"/><rect x="10.70" y="14.85" width="1.6" height="1.6"/><rect x="10.70" y="19.00" width="1.6" height="1.6"/><rect x="14.85" y="2.40" width="1.6" height="1.6"/><rect x="14.85" y="6.55" width="1.6" height="1.6"/><rect x="14.85" y="10.70" width="1.6" height="1.6"/><rect x="14.85" y="14.85" width="1.6" height="1.6"/><rect x="14.85" y="19.00" width="1.6" height="1.6"/><rect x="19.00" y="2.40" width="1.6" height="1.6"/><rect x="19.00" y="6.55" width="1.6" height="1.6"/><rect x="19.00" y="10.70" width="1.6" height="1.6"/><rect x="19.00" y="14.85" width="1.6" height="1.6"/><rect x="19.00" y="19.00" width="1.6" height="1.6"/></g><path d="M3.2 7.35 H7.35 M3.2 11.50 H11.50 M3.2 15.65 H15.65 M3.2 19.80 H19.80 M3.20 7.35 V19.80 M7.35 7.35 V19.80 M11.50 11.50 V19.80 M15.65 15.65 V19.80" stroke="#222" stroke-width="1.2"/></svg><svg class="r" style="left:199.00px;top:204.80px" width="4" height="10"><path d="M0.5 2 H3.5 M0.5 5 H3.5 M0.5 8 H3.5" stroke="#c9c7c3" stroke-width="0.9"/></svg><svg class="r" style="left:216.60px;top:198.80px" width="22" height="22" viewBox="0 0 22 22"><path d="M7 1 H15 L21 7 V15 L15 21 H7 L1 15 V7z" fill="#e8232a" stroke="#b51218" stroke-width="0.8"/><text x="11" y="13.8" font-family="Liberation Sans" font-size="7.2" fill="#fbe2e2" text-anchor="middle">Stop</text></svg><div class="r" style="left:308.00px;top:195.00px;width:28.50px;height:27.50px;border:1px solid #bcb9b3;border-radius:3px;background:linear-gradient(#fbfbfa,#ebeae8);background:linear-gradient(#e9e8e6,#dcdbd9);border-color:#b3b0aa;"></div><svg class="r" style="left:280.00px;top:198.80px" width="22" height="22" viewBox="0 0 22 22"><path d="M4 19 V5 H18" fill="none" stroke="#1a1a1a" stroke-width="1.8"/></svg><svg class="r" style="left:311.80px;top:198.80px" width="22" height="22" viewBox="0 0 22 22"><path d="M3 19 H10 L19 6" fill="none" stroke="#1a1a1a" stroke-width="1.8"/></svg><svg class="r" style="left:343.50px;top:198.80px" width="22" height="22" viewBox="0 0 22 22"><path d="M3 19 L11 6 H19" fill="none" stroke="#1a1a1a" stroke-width="1.8"/></svg><svg class="r" style="left:375.00px;top:198.80px" width="22" height="22" viewBox="0 0 22 22"><path d="M3 18 L19 5" fill="none" stroke="#1a1a1a" stroke-width="1.8"/></svg><div class="r" style="left:406.80px;top:199.00px;width:1px;height:23.00px;background:#dcdad6;box-shadow:1px 0 0 #fafaf9"></div><div class="t" style="left:421.50px;top:203.60px;font-size:13px;line-height:13px;color:#4a4a4a;">Layer:</div><div class="r" style="left:458.60px;top:200.00px;width:114.70px;height:17.80px;border:1px solid #bcb9b3;border-radius:3px;background:linear-gradient(#fbfbfa,#ebeae8);border-radius:3px;background:linear-gradient(#fefefe,#f3f3f2);"></div><div class="t" style="left:463.00px;top:203.60px;font-size:13px;line-height:13px;color:#3c3c3c;">Top Copper</div><svg class="r" style="left:563.50px;top:205.00px" width="8" height="10" viewBox="0 0 8 10"><path d="M2 4 L4 1.5 L6 4 M2 6 L4 8.5 L6 6" fill="none" stroke="#444" stroke-width="1"/></svg><div class="t" style="left:585.50px;top:203.60px;font-size:13px;line-height:13px;color:#4a4a4a;">Width:</div><div class="r" style="left:626.00px;top:200.00px;width:49.40px;height:17.80px;border:1px solid #bcb9b3;border-radius:3px;background:linear-gradient(#fbfbfa,#ebeae8);background:#fdfdfd;"></div><div class="r" style="left:655.00px;top:201.00px;width:1.00px;height:18.00px;background:#d5d3cf;"></div><div class="t" style="left:629.50px;top:203.60px;font-size:13px;line-height:13px;color:#3c3c3c;">0.2</div><svg class="r" style="left:661.50px;top:205.50px" width="9" height="9" viewBox="0 0 9 9"><path d="M1 2 H8 L4.5 6.5z" fill="#666"/></svg><div class="r" style="left:194.60px;top:228.60px;width:94.20px;height:26.20px;border:1px solid #c6c3be;border-bottom:none;border-radius:3px 3px 0 0;background:linear-gradient(#fdfdfd,#f5f5f4)"></div><div class="t" style="left:242.70px;top:235.10px;font-size:13px;line-height:13px;color:#555;transform:translateX(-50%);">default</div><div class="r" style="left:290.80px;top:229.60px;width:95.20px;height:25.20px;border:1px solid #c6c3be;border-bottom:none;border-radius:3px 3px 0 0;background:linear-gradient(#efeeed,#e3e2e0)"></div><div class="t" style="left:339.40px;top:236.10px;font-size:13px;line-height:13px;color:#555;transform:translateX(-50%);">tht</div><div class="r" style="left:388.00px;top:229.60px;width:96.00px;height:25.20px;border:1px solid #c6c3be;border-bottom:none;border-radius:3px 3px 0 0;background:linear-gradient(#efeeed,#e3e2e0)"></div><div class="t" style="left:437.00px;top:236.10px;font-size:13px;line-height:13px;color:#555;transform:translateX(-50%);">smt</div><svg class="r" style="left:171.00px;top:231.00px" width="10" height="4"><path d="M2 0.5 V3.5 M5 0.5 V3.5 M8 0.5 V3.5" stroke="#c9c7c3" stroke-width="0.9"/></svg><svg class="r" style="left:170.50px;top:244.00px" width="14.0" height="20.0" viewBox="0 0 14 20"><path d="M1 1 V15.5 L4.6 12.2 L7.3 18.5 L9.8 17.4 L7.2 11.3 H12z" fill="#fff" stroke="#222" stroke-width="1.1" stroke-linejoin="round"/></svg><svg class="r" style="left:166px;top:275px" width="22" height="22"><circle cx="10.8" cy="10.5" r="7" fill="none" stroke="#0fd40f" stroke-width="4.6"/></svg><div class="r" style="left:162.00px;top:302.40px;width:27.30px;height:26.80px;border:1px solid #bcb9b3;border-radius:3px;background:linear-gradient(#fbfbfa,#ebeae8);background:linear-gradient(#f4f4f3,#e1e0de);border-color:#b3b0aa;"></div><svg class="r" style="left:165.50px;top:306.00px" width="22" height="22" viewBox="0 0 22 22"><path d="M3 19 L19 3" stroke="#111" stroke-width="2"/></svg><svg class="r" style="left:165.50px;top:338.00px" width="22" height="22" viewBox="0 0 22 22"><rect x="4.5" y="3" width="13" height="16" rx="2" fill="#a3a3a0" stroke="#8b8b88" stroke-width="0.7"/><path d="M7 7 h5 M7 9.5 h7 M7 12 h5 M7 14.5 h7" stroke="#d8d8d5" stroke-width="0.8"/></svg><div class="r" style="left:194.80px;top:255.00px;width:372.50px;height:309.00px;background:#000;"></div><svg class="r" style="left:194.8px;top:255px" width="372.5" height="309" viewBox="194.8 255 372.5 309"><rect x="194.8" y="255" width="372.5" height="309" fill="#000"/><rect x="195" y="255" width="14" height="4" fill="#0000b4" /><rect x="229" y="255" width="28" height="4" fill="#0000b4" /><rect x="195" y="271" width="112" height="9" fill="#0000b4" /><rect x="195" y="286" width="68" height="24" fill="#0000b4" /><rect x="195" y="318" width="68" height="15" fill="#0000b4" /><rect x="233" y="345" width="25" height="40" fill="#0000b4" /><rect x="276" y="378" width="28" height="26" fill="#0000b4" /><rect x="290" y="378" width="14" height="26" fill="#4848e0" /><rect x="233" y="435" width="25" height="42" fill="#0000b4" /><rect x="276" y="425" width="28" height="27" fill="#0000b4" /><rect x="290" y="425" width="14" height="27" fill="#4848e0" /><rect x="276" y="472" width="28" height="26" fill="#0000b4" /><rect x="290" y="472" width="14" height="26" fill="#4848e0" /><rect x="306" y="372" width="12" height="130" fill="#0000b4" /><rect x="195" y="340" width="34" height="12" fill="#0000b4" /><rect x="195" y="359.4" width="34" height="7" fill="#0000b4" /><rect x="195" y="373.75" width="34" height="7" fill="#0000b4" /><rect x="195" y="388.09999999999997" width="34" height="7" fill="#0000b4" /><rect x="195" y="459.84999999999997" width="34" height="7" fill="#0000b4" /><rect x="195" y="474.2" width="34" height="7" fill="#0000b4" /><rect x="195" y="488.54999999999995" width="34" height="7" fill="#0000b4" /><rect x="195" y="502.9" width="34" height="7" fill="#0000b4" /><rect x="195" y="517.25" width="34" height="7" fill="#0000b4" /><rect x="195" y="535.5" width="60" height="14" fill="#0a0aff" /><path d="M244 538 L262 556" fill="none" stroke="#0a0aff" stroke-width="10" stroke-linejoin="round" stroke-linecap="round" /><path d="M195 266.3 L260 266.3 L278 284 L278 305" fill="none" stroke="#a00010" stroke-width="6" stroke-linejoin="round" stroke-linecap="round" /><path d="M292.4 266 L292.4 305" fill="none" stroke="#a00010" stroke-width="5.5" stroke-linejoin="round" stroke-linecap="round" /><path d="M306.6 276 L306.6 305" fill="none" stroke="#a00010" stroke-width="5.5" stroke-linejoin="round" stroke-linecap="round" /><path d="M216 300 L216 290 L224 281 L255 281 L264 289 L264 305" fill="none" stroke="#e00000" stroke-width="5.5" stroke-linejoin="round" stroke-linecap="round" /><rect x="195" y="333" width="52" height="5" fill="#b0205a" /><path d="M245 336 L252 328" fill="none" stroke="#c02040" stroke-width="4" stroke-linejoin="round" stroke-linecap="round" /><rect x="200" y="293" width="31.5" height="28.4" fill="#e00000" /><rect x="200" y="293" width="15" height="28.4" fill="#e88888" /><text x="216" y="303" font-family="Liberation Sans" font-size="8" fill="#f5c0c0" text-anchor="middle">2:</text><text x="215" y="314" font-family="Liberation Sans" font-size="9" fill="#f5c0c0" text-anchor="middle">GND</text><rect x="246.29999999999998" y="291" width="5.6" height="14" fill="#e00000" /><rect x="246.29999999999998" y="305" width="5.6" height="15" fill="#e89a9a" /><rect x="246.29999999999998" y="320" width="5.6" height="15" fill="#a3a3a8" /><rect x="260.7" y="291" width="5.6" height="14" fill="#e00000" /><rect x="260.7" y="305" width="5.6" height="15" fill="#e89a9a" /><rect x="260.7" y="320" width="5.6" height="15" fill="#a3a3a8" /><rect x="275.2" y="291" width="5.6" height="14" fill="#e00000" /><rect x="275.2" y="305" width="5.6" height="15" fill="#e89a9a" /><rect x="275.2" y="320" width="5.6" height="15" fill="#a3a3a8" /><rect x="289.59999999999997" y="291" width="5.6" height="14" fill="#e00000" /><rect x="289.59999999999997" y="305" width="5.6" height="15" fill="#e89a9a" /><rect x="289.59999999999997" y="320" width="5.6" height="15" fill="#a3a3a8" /><rect x="303.8" y="291" width="5.6" height="14" fill="#e00000" /><rect x="303.8" y="305" width="5.6" height="15" fill="#e89a9a" /><rect x="303.8" y="320" width="5.6" height="15" fill="#a3a3a8" /><rect x="195" y="353.4" width="4" height="5" fill="#e00000" /><rect x="199" y="353.4" width="15" height="5" fill="#e89a9a" /><rect x="214" y="353.4" width="15" height="5" fill="#9c9cc4" /><rect x="195" y="367.75" width="4" height="5" fill="#e00000" /><rect x="199" y="367.75" width="15" height="5" fill="#e89a9a" /><rect x="214" y="367.75" width="15" height="5" fill="#9c9cc4" /><rect x="195" y="382.09999999999997" width="4" height="5" fill="#e00000" /><rect x="199" y="382.09999999999997" width="15" height="5" fill="#e89a9a" /><rect x="214" y="382.09999999999997" width="15" height="5" fill="#9c9cc4" /><rect x="195" y="396.45" width="4" height="5" fill="#e00000" /><rect x="199" y="396.45" width="15" height="5" fill="#e89a9a" /><rect x="214" y="396.45" width="15" height="5" fill="#9c9cc4" /><rect x="195" y="410.79999999999995" width="4" height="5" fill="#e00000" /><rect x="199" y="410.79999999999995" width="15" height="5" fill="#e89a9a" /><rect x="214" y="410.79999999999995" width="15" height="5" fill="#9c9cc4" /><rect x="195" y="425.15" width="4" height="5" fill="#e00000" /><rect x="199" y="425.15" width="15" height="5" fill="#e89a9a" /><rect x="214" y="425.15" width="15" height="5" fill="#9c9cc4" /><rect x="195" y="439.5" width="4" height="5" fill="#e00000" /><rect x="199" y="439.5" width="15" height="5" fill="#e89a9a" /><rect x="214" y="439.5" width="15" height="5" fill="#9c9cc4" /><rect x="195" y="453.84999999999997" width="4" height="5" fill="#e00000" /><rect x="199" y="453.84999999999997" width="15" height="5" fill="#e89a9a" /><rect x="214" y="453.84999999999997" width="15" height="5" fill="#9c9cc4" /><rect x="195" y="468.2" width="4" height="5" fill="#e00000" /><rect x="199" y="468.2" width="15" height="5" fill="#e89a9a" /><rect x="214" y="468.2" width="15" height="5" fill="#9c9cc4" /><rect x="195" y="482.54999999999995" width="4" height="5" fill="#e00000" /><rect x="199" y="482.54999999999995" width="15" height="5" fill="#e89a9a" /><rect x="214" y="482.54999999999995" width="15" height="5" fill="#9c9cc4" /><rect x="195" y="496.9" width="4" height="5" fill="#e00000" /><rect x="199" y="496.9" width="15" height="5" fill="#e89a9a" /><rect x="214" y="496.9" width="15" height="5" fill="#9c9cc4" /><rect x="195" y="511.25" width="4" height="5" fill="#e00000" /><rect x="199" y="511.25" width="15" height="5" fill="#e89a9a" /><rect x="214" y="511.25" width="15" height="5" fill="#9c9cc4" /><path d="M227 408 L227 502" fill="none" stroke="#e00000" stroke-width="3.5" stroke-linejoin="round" stroke-linecap="round" /><path d="M266 296 L294 329" fill="none" stroke="#0a0aff" stroke-width="18" stroke-linejoin="round" stroke-linecap="round" opacity="0.78"/><circle cx="283" cy="345" r="11" fill="#0a0aff" opacity="0.9"/><circle cx="301" cy="362" r="11" fill="#0a0aff" opacity="0.9"/><path d="M237 356 L272 393 L300 393" fill="none" stroke="#0a0aff" stroke-width="9" stroke-linejoin="round" stroke-linecap="round" opacity="0.9"/><circle cx="283" cy="256.5" r="8" fill="none" stroke="#00b400" stroke-width="5"/><circle cx="283" cy="256.5" r="3.2" fill="#b01060"/><circle cx="315.5" cy="265" r="8" fill="none" stroke="#00b400" stroke-width="5"/><circle cx="315.5" cy="265" r="3.2" fill="#b01060"/><circle cx="342.5" cy="264" r="8" fill="none" stroke="#00b400" stroke-width="5"/><circle cx="342.5" cy="264" r="3.2" fill="#b01060"/><path d="M251 408.5 L320 408.5" fill="none" stroke="#e00000" stroke-width="5.5" stroke-linejoin="round" stroke-linecap="round" /><circle cx="228" cy="408.5" r="8" fill="none" stroke="#10d010" stroke-width="4.8"/><circle cx="228" cy="408.5" r="3" fill="#e00000"/><circle cx="251" cy="408.5" r="8" fill="none" stroke="#10d010" stroke-width="4.8"/><circle cx="251" cy="408.5" r="3" fill="#e00000"/><text x="240" y="404" font-family="Liberation Sans" font-size="8.5" fill="#90f090" text-anchor="middle" opacity="0.85">GNDGND</text><circle cx="270.7" cy="491.7" r="14.8" fill="#00008c" stroke="#a8a8c0" stroke-width="5" opacity="0.95"/><rect x="261" y="485" width="20" height="12" fill="#000" /><path d="M263.8 521 L284 543 L310 543" fill="none" stroke="#e00000" stroke-width="4.5" stroke-linejoin="round" stroke-linecap="round" /><rect x="246.0" y="534" width="5.6" height="31" fill="#e89a9a" /><rect x="260.5" y="534" width="5.6" height="31" fill="#e89a9a" /><rect x="274.8" y="534" width="5.6" height="31" fill="#e89a9a" /><rect x="289.2" y="534" width="5.6" height="31" fill="#e89a9a" /><rect x="303.8" y="534" width="5.6" height="31" fill="#e89a9a" /><circle cx="263.8" cy="521" r="7.8" fill="none" stroke="#10d010" stroke-width="4.6"/><circle cx="263.8" cy="521" r="3" fill="#c01030"/><circle cx="296.6" cy="521" r="7.8" fill="none" stroke="#10d010" stroke-width="4.6"/><circle cx="296.6" cy="521" r="3" fill="#c01030"/><rect x="199" y="549" width="46" height="15" fill="#d47fa0" /><rect x="233" y="549" width="12" height="15" fill="#a01860" /><rect x="201" y="552" width="14" height="12" fill="#000" /><circle cx="308" cy="545" r="10" fill="none" stroke="#9c9ca4" stroke-width="3"/><g opacity="0.75"><path d="M231 512 L231 346 L240 337.4 L320 337.4" fill="none" stroke="#b4b4e6" stroke-width="3.6" stroke-linejoin="round" stroke-linecap="round" /><path d="M268.7 343 L268.7 476" fill="none" stroke="#b8b8c8" stroke-width="2.4" stroke-linejoin="round" stroke-linecap="round" /><path d="M231 512 L243 528 L320 528" fill="none" stroke="#b0b0b8" stroke-width="3.6" stroke-linejoin="round" stroke-linecap="round" /><rect x="240" y="524.5" width="80" height="9.5" fill="#a8a8b0" /><path d="M215 555 L215 540 L222 533 L229 533" fill="none" stroke="#b0b0b8" stroke-width="2.5" stroke-linejoin="round" stroke-linecap="round" /></g><path d="M262 337 L269 344" fill="none" stroke="#e8e8e8" stroke-width="2.5" stroke-linejoin="round" stroke-linecap="round" /><circle cx="233" cy="344" r="2.5" fill="#e0e0f0"/><circle cx="239" cy="339" r="2.2" fill="#e0e0f0"/><path d="M446 255.5 H493 L504 266 H436z" fill="#0a0aff"/><path d="M448 257.5 H491 L498 266 H442z" fill="#9c0040"/><circle cx="446" cy="261.5" r="3" fill="#e00000"/><circle cx="492" cy="261.5" r="3" fill="#e00000"/><rect x="547.8" y="255" width="19" height="11" fill="#0000b4" /><rect x="547.8" y="255" width="6" height="11" fill="#4040e0" /></svg><div class="r" style="left:567.30px;top:255.00px;width:14.50px;height:309.00px;background:#f2f1f0;"></div><div class="r" style="left:194.80px;top:253.60px;width:387.00px;height:1.00px;background:#d6d4d0;"></div><div class="r" style="left:570px;top:254.5px;width:9.5px;height:14px;border:1px solid #c9c6c1;border-radius:6px 6px 0 0;background:#f8f8f7"></div><svg class="r" style="left:571.50px;top:257.50px" width="8" height="7" viewBox="0 0 8 7"><path d="M1 5 H7 L4 1.5z" fill="#555"/></svg><div class="r" style="left:194.80px;top:567.80px;width:372.50px;height:11.20px;background:#f2f1f0;"></div><div class="r" style="left:194.80px;top:567.80px;width:14.20px;height:9.20px;border:1px solid #c9c6c1;border-radius:6px 0 0 6px;background:#fafaf9"></div><svg class="r" style="left:199.30px;top:569.40px" width="7" height="8" viewBox="0 0 7 8"><path d="M5 1 V7 L1.5 4z" fill="#555"/></svg><div class="r" style="left:209.80px;top:567.80px;width:357.50px;height:9.20px;border:1px solid #c9c6c1;border-radius:6px;background:linear-gradient(#e4e3e1,#d4d3d0)"></div><div class="r" style="left:158.00px;top:579.30px;width:707.60px;height:1.00px;background:#d9d7d3;"></div><div class="t" style="left:589.00px;top:233.00px;font-size:13px;line-height:13px;color:#4a4a4a;">Place Devices [2]</div><svg class="r" style="left:836.50px;top:233.50px" width="11" height="11" viewBox="0 0 11 11"><rect x="0.5" y="0.5" width="10" height="10" rx="1.5" fill="#f4f4f3" stroke="#8e8c88" stroke-width="0.9"/><rect x="2.5" y="4.5" width="4" height="4" fill="none" stroke="#444" stroke-width="0.9"/><path d="M4.5 4.5 V2.5 H8.5 V6.5 H6.5" fill="none" stroke="#444" stroke-width="0.9"/></svg><svg class="r" style="left:851.80px;top:233.50px" width="11" height="11" viewBox="0 0 11 11"><rect x="0.5" y="0.5" width="10" height="10" rx="1.5" fill="#f4f4f3" stroke="#8e8c88" stroke-width="0.9"/><path d="M3 3 L8 8 M8 3 L3 8" stroke="#444" stroke-width="1.1"/></svg><div class="r" style="left:594.50px;top:258.00px;width:262.50px;height:40.00px;background:#ececeb;box-sizing:border-box;border:1px solid #c3c0bb;"></div><div class="t" style="left:598.00px;top:261.00px;font-size:13px;line-height:13px;color:#3c3c3c;">(14) D1 (BAS21) [Schottky Diode]</div></div><div class="win" style="clip-path:inset(264.9px 0px 0px 318px);"><div class="r" style="left:318.00px;top:284.90px;width:706.00px;height:446.10px;background:#f2f1f0;"></div><div class="r tb" style="left:318px;top:264.9px;width:706px;height:24.5px;border-radius:5px 5px 0 0"></div><svg class="r" style="left:318px;top:264.9px" width="60" height="25" viewBox="0 0 60 25"><defs><radialGradient id="cg" cx="50%" cy="40%" r="60%"><stop offset="0" stop-color="#f37c4f"/><stop offset="1" stop-color="#d9531e"/></radialGradient><linearGradient id="gg" x1="0" y1="0" x2="0" y2="1"><stop offset="0" stop-color="#7b7973"/><stop offset="1" stop-color="#65635d"/></linearGradient></defs><circle cx="13.6" cy="12.8" r="6.8" fill="url(#cg)" stroke="#3a3935" stroke-width="0.6"/><path d="M11.2 10.4 L16 15.2 M16 10.4 L11.2 15.2" stroke="#3b2a22" stroke-width="1.3"/><circle cx="30.4" cy="12.8" r="6.8" fill="url(#gg)" stroke="#3a3935" stroke-width="0.6"/><path d="M27.4 12.8 H33.4" stroke="#2f2e2b" stroke-width="1.3"/><circle cx="47.2" cy="12.8" r="6.8" fill="url(#gg)" stroke="#3a3935" stroke-width="0.6"/><rect x="44.6" y="10.2" width="5.2" height="5.2" fill="none" stroke="#2f2e2b" stroke-width="1.2"/></svg><div class="t" style="left:386.90px;top:271.50px;font-size:13px;line-height:13px;color:#dfdbd2;">File</div><div class="t" style="left:416.60px;top:271.50px;font-size:13px;line-height:13px;color:#dfdbd2;">Edit</div><div class="t" style="left:449.40px;top:271.50px;font-size:13px;line-height:13px;color:#dfdbd2;">View</div><div class="t" style="left:487.00px;top:271.50px;font-size:13px;line-height:13px;color:#dfdbd2;">Project</div><div class="t" style="left:539.70px;top:271.50px;font-size:13px;line-height:13px;color:#dfdbd2;">Tools</div><div class="t" style="left:580.00px;top:271.50px;font-size:13px;line-height:13px;color:#dfdbd2;">Help</div><svg class="r" style="left:321.00px;top:301.80px" width="4" height="10"><path d="M0.5 2 H3.5 M0.5 5 H3.5 M0.5 8 H3.5" stroke="#c9c7c3" stroke-width="0.9"/></svg><svg class="r" style="left:332.40px;top:295.80px" width="22" height="22" viewBox="0 0 22 22"><defs><linearGradient id="ic_close" x1="0" y1="0" x2="0" y2="1"><stop offset="0" stop-color="#d0413c"/><stop offset="0.55" stop-color="#a8150f"/><stop offset="1" stop-color="#c8350a"/></linearGradient></defs><rect x="1.5" y="1.5" width="19" height="19" rx="2.5" fill="url(#ic_close)" stroke="#8a1410" stroke-width="0.8"/><path d="M6 6 L16 16 M16 6 L6 16" stroke="#f4f0ee" stroke-width="2.6" stroke-linecap="round"/></svg><div class="r" style="left:363.70px;top:295.00px;width:1px;height:23.00px;background:#dcdad6;box-shadow:1px 0 0 #fafaf9"></div><svg class="r" style="left:373.50px;top:295.80px" width="22" height="22" viewBox="0 0 22 22"><path d="M4.5 2 H15 L17.5 4.5 V20 H4.5z" fill="#eeeeec" stroke="#c4c4c0" stroke-width="0.8"/><circle cx="16.5" cy="3.8" r="2.6" fill="#f7f36a" stroke="#e8df3a" stroke-width="0.5"/></svg><svg class="r" style="left:405.70px;top:295.80px" width="22" height="22" viewBox="0 0 22 22"><defs><linearGradient id="ic_sv" x1="0" y1="0" x2="0" y2="1"><stop offset="0" stop-color="#e6e6e4"/><stop offset="1" stop-color="#9a9a96"/></linearGradient></defs><path d="M2 13 L5 9 H17 L20 13 V18.5 H2z" fill="url(#ic_sv)" stroke="#7b7b77" stroke-width="0.7"/><rect x="3" y="16" width="16" height="2" fill="#5d5d5a"/><path d="M8.5 1 H13.5 V7 H16.5 L11 12.5 L5.5 7 H8.5z" fill="#7cc943" stroke="#4e9a1f" stroke-width="0.6"/></svg><svg class="r" style="left:437.00px;top:295.80px" width="22" height="22" viewBox="0 0 22 22"><rect x="5.5" y="2" width="11" height="6" fill="#f6f6f5" stroke="#6e6e6b" stroke-width="0.8"/><rect x="2" y="8" width="18" height="8" rx="1.2" fill="#a7a7a4" stroke="#4d4d4a" stroke-width="0.8"/><rect x="2.5" y="11" width="17" height="1.6" fill="#3b3b39"/><rect x="5.5" y="15" width="11" height="5.5" fill="#f8f8f7" stroke="#6e6e6b" stroke-width="0.8"/></svg><svg class="r" style="left:469.00px;top:295.80px" width="22" height="22" viewBox="0 0 22 22"><path d="M4 1.5 H14 L18 5.5 V20.5 H4z" fill="#f3f3f2" stroke="#c9c9c6" stroke-width="0.8"/><path d="M6.5 16.5 C9 12 11 7 10.5 4.5 C10 3 9 4 9.5 6 C10.5 10 13 13 17 14 C18.5 14.3 17.5 12.8 16 13 C12 13.5 8 15.5 6.5 16.5z" fill="none" stroke="#d43b3b" stroke-width="1.2"/></svg><div class="r" style="left:499.90px;top:295.00px;width:1px;height:23.00px;background:#dcdad6;box-shadow:1px 0 0 #fafaf9"></div><svg class="r" style="left:510.70px;top:295.80px" width="22" height="22" viewBox="0 0 22 22"><path d="M11 1.8 L21 11 H18 V20 H4 V11 H1z" fill="#4a86cf" stroke="#2f66ad" stroke-width="0.7"/><rect x="15.5" y="2.5" width="2.5" height="5" fill="#4a86cf"/></svg><svg class="r" style="left:541.90px;top:295.80px" width="22" height="22" viewBox="0 0 22 22"><rect x="3.5" y="3" width="15" height="17" rx="2" fill="#4b4b49" stroke="#2e2e2c" stroke-width="0.7"/><path d="M6 7 h5 M6 9.5 h8 M6 12 h6 M6 14.5 h8" stroke="#9b9b98" stroke-width="0.8"/></svg><div class="r" style="left:573.50px;top:295.00px;width:1px;height:23.00px;background:#dcdad6;box-shadow:1px 0 0 #fafaf9"></div><svg class="r" style="left:583.50px;top:295.80px" width="22" height="22" viewBox="0 0 22 22"><path d="M8 4 L2.5 9 L8 14 V11 C12 10.5 15 12 16 17 C19 12 16.5 7 8 7z" fill="#c8c8c6" stroke="#b5b5b2" stroke-width="0.6"/></svg><svg class="r" style="left:615.50px;top:295.80px" width="22" height="22" viewBox="0 0 22 22"><path d="M14 4 L19.5 9 L14 14 V11 C10 10.5 7 12 6 17 C3 12 5.5 7 14 7z" fill="#c8c8c6" stroke="#b5b5b2" stroke-width="0.6"/></svg><svg class="r" style="left:646.00px;top:301.80px" width="4" height="10"><path d="M0.5 2 H3.5 M0.5 5 H3.5 M0.5 8 H3.5" stroke="#c9c7c3" stroke-width="0.9"/></svg><svg class="r" style="left:659.00px;top:295.80px" width="22" height="22" viewBox="0 0 22 22"><defs><radialGradient id="ic_zm" cx="40%" cy="35%" r="65%"><stop offset="0" stop-color="#d7e9fb"/><stop offset="1" stop-color="#5d9ae0"/></radialGradient></defs><path d="M13.5 13.5 L19.5 19.5" stroke="#4a4a48" stroke-width="3" stroke-linecap="round"/><circle cx="9" cy="9" r="7" fill="url(#ic_zm)" stroke="#8a9fb5" stroke-width="1.2"/><path d="M5.5 9 H12.5 M9 5.5 V12.5" stroke="#fff" stroke-width="1.8"/></svg><svg class="r" style="left:691.00px;top:295.80px" width="22" height="22" viewBox="0 0 22 22"><defs><radialGradient id="ic_zm" cx="40%" cy="35%" r="65%"><stop offset="0" stop-color="#d7e9fb"/><stop offset="1" stop-color="#5d9ae0"/></radialGradient></defs><path d="M13.5 13.5 L19.5 19.5" stroke="#4a4a48" stroke-width="3" stroke-linecap="round"/><circle cx="9" cy="9" r="7" fill="url(#ic_zm)" stroke="#8a9fb5" stroke-width="1.2"/><path d="M5.5 9 H12.5" stroke="#fff" stroke-width="1.8"/></svg><svg class="r" style="left:723.00px;top:295.80px" width="22" height="22" viewBox="0 0 22 22"><defs><radialGradient id="ic_zm" cx="40%" cy="35%" r="65%"><stop offset="0" stop-color="#d7e9fb"/><stop offset="1" stop-color="#5d9ae0"/></radialGradient></defs><path d="M13.5 13.5 L19.5 19.5" stroke="#4a4a48" stroke-width="3" stroke-linecap="round"/><circle cx="9" cy="9" r="7" fill="url(#ic_zm)" stroke="#8a9fb5" stroke-width="1.2"/><path d="M5.5 9 H12.5 M9 5.5 V12.5" stroke="#a9c8ec" stroke-width="1"/><circle cx="9" cy="9" r="3" fill="none" stroke="#fff" stroke-width="1"/></svg><svg class="r" style="left:753.00px;top:301.80px" width="4" height="10"><path d="M0.5 2 H3.5 M0.5 5 H3.5 M0.5 8 H3.5" stroke="#c9c7c3" stroke-width="0.9"/></svg><svg class="r" style="left:765.50px;top:295.80px" width="22" height="22" viewBox="0 0 22 22"><defs><linearGradient id="ic_rt" x1="0" y1="0" x2="1" y2="1"><stop offset="0" stop-color="#c2b0e6"/><stop offset="1" stop-color="#7a5fb8"/></linearGradient></defs><path d="M11 3 A8 8 0 1 1 3.5 13 L7 12.5 A4.5 4.5 0 1 0 11 6.5 V9.5 L6 4.8 L11 0.5z" fill="url(#ic_rt)" stroke="#6d56a8" stroke-width="0.6"/><circle cx="11" cy="11" r="1.6" fill="#7a5fb8"/></svg><svg class="r" style="left:797.50px;top:295.80px" width="22" height="22" viewBox="0 0 22 22"><defs><linearGradient id="ic_rt2" x1="1" y1="0" x2="0" y2="1"><stop offset="0" stop-color="#c2b0e6"/><stop offset="1" stop-color="#7a5fb8"/></linearGradient></defs><path d="M11 3 A8 8 0 1 0 18.5 13 L15 12.5 A4.5 4.5 0 1 1 11 6.5 V9.5 L16 4.8 L11 0.5z" fill="url(#ic_rt2)" stroke="#6d56a8" stroke-width="0.6"/><circle cx="11" cy="11" r="1.6" fill="#7a5fb8"/></svg><svg class="r" style="left:827.50px;top:295.80px" width="22" height="22" viewBox="0 0 22 22"><path d="M8.5 13 L19.5 2.5 L11 14.5z" fill="#c9c9c6" stroke="#8c8c89" stroke-width="0.7"/><path d="M9.5 11 L21 8 L10.5 14z" fill="#d6d6d3" stroke="#8c8c89" stroke-width="0.7"/><circle cx="5.8" cy="11.8" r="2.9" fill="none" stroke="#d62828" stroke-width="1.9"/><circle cx="8.6" cy="17.2" r="2.9" fill="none" stroke="#d62828" stroke-width="1.9"/></svg><svg class="r" style="left:860.00px;top:295.80px" width="22" height="22" viewBox="0 0 22 22"><path d="M2.5 1.5 H13 V16 H2.5z" fill="#f5f5f4" stroke="#b8b8b5" stroke-width="0.8"/><path d="M7 5 H18.5 V17.5 L16 20.5 H7z" fill="#fbfbfa" stroke="#b8b8b5" stroke-width="0.8"/></svg><svg class="r" style="left:892.50px;top:295.80px" width="22" height="22" viewBox="0 0 22 22"><rect x="3" y="4" width="14" height="16" rx="1" fill="#d9a35b" stroke="#a9793a" stroke-width="0.8"/><rect x="7" y="1.5" width="6" height="4" rx="1" fill="#b9b9b6" stroke="#7c7c79" stroke-width="0.7"/><rect x="9.5" y="10" width="9" height="10" fill="#f4f4f3" stroke="#bdbdba" stroke-width="0.7"/></svg><svg class="r" style="left:924.00px;top:295.80px" width="22" height="22" viewBox="0 0 22 22"><rect x="4.5" y="3" width="13" height="2.5" rx="1" fill="#b8b8b5" stroke="#7e7e7b" stroke-width="0.6"/><path d="M5.5 6 H16.5 L15.5 20 H6.5z" fill="#c9c9c6" stroke="#7e7e7b" stroke-width="0.7"/><path d="M8.5 8 V18 M11 8 V18 M13.5 8 V18" stroke="#8e8e8b" stroke-width="0.9"/></svg><svg class="r" style="left:321.00px;top:337.40px" width="4" height="10"><path d="M0.5 2 H3.5 M0.5 5 H3.5 M0.5 8 H3.5" stroke="#c9c7c3" stroke-width="0.9"/></svg><svg class="r" style="left:332.40px;top:331.40px" width="22" height="22" viewBox="0 0 22 22"><rect x="6" y="6" width="14" height="14" fill="#e01818"/><rect x="4" y="4" width="14" height="14" fill="#21c521"/><rect x="2" y="2" width="14" height="14" fill="#1010ee"/></svg><svg class="r" style="left:363.70px;top:331.40px" width="22" height="22" viewBox="0 0 22 22"><g fill="#555"><rect x="2.40" y="2.40" width="1.6" height="1.6"/><rect x="2.40" y="6.55" width="1.6" height="1.6"/><rect x="2.40" y="10.70" width="1.6" height="1.6"/><rect x="2.40" y="14.85" width="1.6" height="1.6"/><rect x="2.40" y="19.00" width="1.6" height="1.6"/><rect x="6.55" y="2.40" width="1.6" height="1.6"/><rect x="6.55" y="6.55" width="1.6" height="1.6"/><rect x="6.55" y="10.70" width="1.6" height="1.6"/><rect x="6.55" y="14.85" width="1.6" height="1.6"/><rect x="6.55" y="19.00" width="1.6" height="1.6"/><rect x="10.70" y="2.40" width="1.6" height="1.6"/><rect x="10.70" y="6.55" width="1.6" height="1.6"/><rect x="10.70" y="10.70" width="1.6" height="1.6"/><rect x="10.70" y="14.85" width="1.6" height="1.6"/><rect x="10.70" y="19.00" width="1.6" height="1.6"/><rect x="14.85" y="2.40" width="1.6" height="1.6"/><rect x="14.85" y="6.55" width="1.6" height="1.6"/><rect x="14.85" y="10.70" width="1.6" height="1.6"/><rect x="14.85" y="14.85" width="1.6" height="1.6"/><rect x="14.85" y="19.00" width="1.6" height="1.6"/><rect x="19.00" y="2.40" width="1.6" height="1.6"/><rect x="19.00" y="6.55" width="1.6" height="1.6"/><rect x="19.00" y="10.70" width="1.6" height="1.6"/><rect x="19.00" y="14.85" width="1.6" height="1.6"/><rect x="19.00" y="19.00" width="1.6" height="1.6"/></g><path d="M3.2 7.35 H7.35 M3.2 11.50 H11.50 M3.2 15.65 H15.65 M3.2 19.80 H19.80 M3.20 7.35 V19.80 M7.35 7.35 V19.80 M11.50 11.50 V19.80 M15.65 15.65 V19.80" stroke="#222" stroke-width="1.2"/></svg><svg class="r" style="left:396.00px;top:337.40px" width="4" height="10"><path d="M0.5 2 H3.5 M0.5 5 H3.5 M0.5 8 H3.5" stroke="#c9c7c3" stroke-width="0.9"/></svg><svg class="r" style="left:407.20px;top:331.40px" width="22" height="22" viewBox="0 0 22 22"><path d="M7 1 H15 L21 7 V15 L15 21 H7 L1 15 V7z" fill="#e8232a" stroke="#b51218" stroke-width="0.8"/><text x="11" y="13.8" font-family="Liberation Sans" font-size="7.2" fill="#fbe2e2" text-anchor="middle">Stop</text></svg><div class="r" style="left:438.50px;top:331.00px;width:1px;height:23.00px;background:#dcdad6;box-shadow:1px 0 0 #fafaf9"></div><svg class="r" style="left:329.80px;top:363.00px" width="10" height="4"><path d="M2 0.5 V3.5 M5 0.5 V3.5 M8 0.5 V3.5" stroke="#c9c7c3" stroke-width="0.9"/></svg><svg class="r" style="left:365.50px;top:363.00px" width="10" height="4"><path d="M2 0.5 V3.5 M5 0.5 V3.5 M8 0.5 V3.5" stroke="#c9c7c3" stroke-width="0.9"/></svg><div class="r" style="left:320.80px;top:371.30px;width:27.50px;height:27.10px;border:1px solid #bcb9b3;border-radius:3px;background:linear-gradient(#fbfbfa,#ebeae8);background:linear-gradient(#f4f4f3,#e1e0de);border-color:#b3b0aa;"></div><svg class="r" style="left:330.00px;top:377.00px" width="14.0" height="20.0" viewBox="0 0 14 20"><path d="M1 1 V15.5 L4.6 12.2 L7.3 18.5 L9.8 17.4 L7.2 11.3 H12z" fill="#fff" stroke="#222" stroke-width="1.1" stroke-linejoin="round"/></svg><svg class="r" style="left:323.80px;top:407.00px" width="22" height="22" viewBox="0 0 22 22"><path d="M3 19 L19 3" stroke="#111" stroke-width="2"/></svg><svg class="r" style="left:323.80px;top:438.00px" width="22" height="22" viewBox="0 0 22 22"><path d="M1.5 15 H20.5" stroke="#111" stroke-width="1.6"/><text x="12" y="11" font-family="Liberation Sans" font-weight="bold" font-size="7.5" text-anchor="middle" fill="#111">NET</text><path d="M3 11.5 h2.5 M4.25 10.2 v2.6" stroke="#d22" stroke-width="0.8"/></svg><svg class="r" style="left:323.80px;top:470.20px" width="22" height="22" viewBox="0 0 22 22"><rect x="3.5" y="3" width="15" height="17" rx="2" fill="#4b4b49" stroke="#2e2e2c" stroke-width="0.7"/><path d="M6 7 h5 M6 9.5 h8 M6 12 h6 M6 14.5 h8" stroke="#9b9b98" stroke-width="0.8"/></svg><svg class="r" style="left:359.50px;top:374.90px" width="22" height="22" viewBox="0 0 22 22"><path d="M1 11 H5 M17 11 H21" stroke="#111" stroke-width="1.2"/><rect x="5" y="8.8" width="12" height="4.4" fill="#fff" stroke="#111" stroke-width="1.2"/></svg><svg class="r" style="left:359.50px;top:407.00px" width="22" height="22" viewBox="0 0 22 22"><path d="M1 11 H5 M17 11 H21" stroke="#111" stroke-width="1.2"/><rect x="5" y="8.8" width="12" height="4.4" fill="#111"/></svg><svg class="r" style="left:359.50px;top:438.00px" width="22" height="22" viewBox="0 0 22 22"><path d="M11 2 V8.5 M11 13.5 V20" stroke="#111" stroke-width="1.2"/><rect x="5" y="7.6" width="12" height="2.4" fill="#111"/><rect x="5" y="12" width="12" height="2.4" fill="#111"/></svg><svg class="r" style="left:359.50px;top:470.00px" width="22" height="22" viewBox="0 0 22 22"><path d="M11 2 V8.5 M11 13.5 V20" stroke="#111" stroke-width="1.2"/><rect x="5" y="7.6" width="12" height="2.4" fill="#bbb"/><rect x="5" y="12" width="12" height="2.4" fill="#111"/></svg><svg class="r" style="left:359.50px;top:502.50px" width="22" height="22" viewBox="0 0 22 22"><path d="M11 0 V10" stroke="#111" stroke-width="1.1"/><path d="M5.5 10.3 H16.5" stroke="#111" stroke-width="1.9"/><text x="11" y="18.8" font-family="Liberation Sans" font-weight="bold" font-size="7.2" text-anchor="middle" fill="#222">GND</text></svg><svg class="r" style="left:359.50px;top:533.00px" width="22" height="22" viewBox="0 0 22 22"><path d="M11 12 V1 M7.2 4.8 L11 1 L14.8 4.8" fill="none" stroke="#111" stroke-width="1.1"/><text x="11" y="20.5" font-family="Liberation Sans" font-weight="bold" font-size="7.2" text-anchor="middle" fill="#222">VCC</text></svg><div class="t" style="left:390.40px;top:365.50px;font-size:13px;line-height:13px;color:#4a4a4a;">Pages</div><div class="r" style="left:388.70px;top:382.20px;width:84.10px;height:307.40px;background:#fff;box-sizing:border-box;border:1px solid #c3c0bb;"></div><div class="r" style="left:389.70px;top:383.20px;width:82.10px;height:86.80px;background:#dcdcdb;"></div><svg class="r" style="left:392.9px;top:383.9px" width="74" height="53" viewBox="0 0 74 53"><rect x="0" y="0" width="74" height="53" fill="#f8c6b6"/><rect x="2.8" y="2.5" width="68.5" height="47.8" fill="none" stroke="#d98a80" stroke-width="0.5"/><path d="M43.5 5 V44 M2.8 44 H71.3" stroke="#cfa090" stroke-width="0.4"/><rect x="45.5" y="44.8" width="25" height="4.5" fill="none" stroke="#c07068" stroke-width="0.5"/><rect x="59" y="44.8" width="4" height="1.5" fill="#d04040"/><text x="5" y="7.5" font-family="Liberation Sans" font-size="4" fill="#a06050">Brushless</text><rect x="16" y="11" width="6" height="22" fill="#f4dcb0" stroke="#c08060" stroke-width="0.4"/><rect x="47.5" y="6" width="4" height="5" fill="#f4dcb0"/><rect x="47.5" y="15" width="4" height="5" fill="#f4dcb0"/><rect x="47.5" y="24" width="4" height="5" fill="#f4dcb0"/><rect x="24" y="12" width="4" height="2" fill="#b8d8a0"/><rect x="24" y="17" width="4" height="2" fill="#b8d8a0"/><rect x="24" y="22" width="4" height="2" fill="#b8d8a0"/><rect x="24" y="27" width="4" height="2" fill="#b8d8a0"/><rect x="13" y="29" width="2" height="4" fill="#a0c890"/><rect x="5" y="33" width="3" height="4" fill="#b8d8a0"/><rect x="5" y="40" width="3" height="4" fill="#b8d8a0"/><rect x="24" y="39" width="4" height="5" fill="#f4dcb0"/><path d="M5 16 H15 M5 20 H15 M5 24 H15 M35 12 H42 M35 20 H42 M45 11 H66 M45 20 H66 M45 29 H66 M45 37 H58 M20 42 H40" stroke="#b08070" stroke-width="0.35"/><path d="M8 14 h4 M8 19 h5 M8 23 h3 M52 8 h6 M52 17 h6 M52 26 h6 M30 10 h3 M30 19 h3" stroke="#806050" stroke-width="0.6"/></svg><div class="t" style="left:430.20px;top:440.70px;font-size:13px;line-height:13px;color:#3c3c3c;transform:translateX(-50%);">1: Brushless</div><div class="t" style="left:430.20px;top:455.40px;font-size:13px;line-height:13px;color:#3c3c3c;transform:translateX(-50%);">Controller</div><div class="r" style="left:389.40px;top:691.90px;width:16.80px;height:16.40px;border:1px solid #bcb9b3;border-radius:3px;background:linear-gradient(#fbfbfa,#ebeae8);"></div><svg class="r" style="left:391.80px;top:694.00px" width="14" height="14" viewBox="0 0 14 14"><path d="M7 1.5 V12.5 M1.5 7 H12.5" stroke="#4cb82a" stroke-width="3.2"/></svg><div class="r" style="left:410.70px;top:691.90px;width:16.80px;height:16.40px;border:1px solid #bcb9b3;border-radius:3px;background:linear-gradient(#fbfbfa,#ebeae8);"></div><svg class="r" style="left:413.10px;top:694.00px" width="14" height="14" viewBox="0 0 14 14"><path d="M1.5 7 H12.5" stroke="#e84848" stroke-width="3.2"/></svg><div class="r" style="left:432.20px;top:691.90px;width:16.80px;height:16.40px;border:1px solid #bcb9b3;border-radius:3px;background:linear-gradient(#fbfbfa,#ebeae8);"></div><svg class="r" style="left:436.60px;top:697.00px" width="10" height="8" viewBox="0 0 10 8"><path d="M1 6 H9 L5 1.5z" fill="#666"/></svg><div class="r" style="left:453.40px;top:691.90px;width:16.80px;height:16.40px;border:1px solid #bcb9b3;border-radius:3px;background:linear-gradient(#fbfbfa,#ebeae8);"></div><svg class="r" style="left:457.80px;top:697.00px" width="10" height="8" viewBox="0 0 10 8"><path d="M1 2 H9 L5 6.5z" fill="#666"/></svg><svg class="r" style="left:478.6px;top:360.3px" width="344.0" height="336.1" viewBox="478.6 360.3 344.0 336.1"><rect x="478.6" y="360.3" width="344.0" height="336.09999999999997" fill="#fff"/><path d="M481.46 360.3V696.4M489.94 360.3V696.4M498.43 360.3V696.4M506.91 360.3V696.4M515.40 360.3V696.4M523.88 360.3V696.4M532.37 360.3V696.4M540.86 360.3V696.4M549.34 360.3V696.4M557.82 360.3V696.4M566.31 360.3V696.4M574.79 360.3V696.4M583.28 360.3V696.4M591.76 360.3V696.4M600.25 360.3V696.4M608.74 360.3V696.4M617.22 360.3V696.4M625.70 360.3V696.4M634.19 360.3V696.4M642.67 360.3V696.4M651.16 360.3V696.4M659.64 360.3V696.4M668.13 360.3V696.4M676.62 360.3V696.4M685.10 360.3V696.4M693.59 360.3V696.4M702.07 360.3V696.4M710.55 360.3V696.4M719.04 360.3V696.4M727.52 360.3V696.4M736.01 360.3V696.4M744.49 360.3V696.4M752.98 360.3V696.4M761.46 360.3V696.4M769.95 360.3V696.4M778.43 360.3V696.4M786.92 360.3V696.4M795.40 360.3V696.4M803.89 360.3V696.4M812.38 360.3V696.4M820.86 360.3V696.4M478.6 365.80H822.6M478.6 374.29H822.6M478.6 382.77H822.6M478.6 391.25H822.6M478.6 399.74H822.6M478.6 408.23H822.6M478.6 416.71H822.6M478.6 425.19H822.6M478.6 433.68H822.6M478.6 442.17H822.6M478.6 450.65H822.6M478.6 459.13H822.6M478.6 467.62H822.6M478.6 476.11H822.6M478.6 484.59H822.6M478.6 493.07H822.6M478.6 501.56H822.6M478.6 510.05H822.6M478.6 518.53H822.6M478.6 527.01H822.6M478.6 535.50H822.6M478.6 543.99H822.6M478.6 552.47H822.6M478.6 560.95H822.6M478.6 569.44H822.6M478.6 577.92H822.6M478.6 586.41H822.6M478.6 594.89H822.6M478.6 603.38H822.6M478.6 611.87H822.6M478.6 620.35H822.6M478.6 628.84H822.6M478.6 637.32H822.6M478.6 645.81H822.6M478.6 654.29H822.6M478.6 662.77H822.6M478.6 671.26H822.6M478.6 679.75H822.6M478.6 688.23H822.6" stroke="#cbcbcf" stroke-width="1.1"/><rect x="479.1" y="360.8" width="343.0" height="335.09999999999997" fill="none" stroke="#c8c6c2" stroke-width="1"/><path d="M479.00 374.30 L566.00 374.30" fill="none" stroke="#55a955" stroke-width="1.3"/><path d="M582.60 374.30 L625.40 374.30 L625.40 413.00" fill="none" stroke="#55a955" stroke-width="1.3"/><path d="M625.40 420.40 L625.40 433.90" fill="none" stroke="#55a955" stroke-width="1.3"/><path d="M566.00 374.30 L570.00 374.30" fill="none" stroke="#c86464" stroke-width="1.3"/><path d="M578.40 374.30 L582.60 374.30" fill="none" stroke="#c86464" stroke-width="1.3"/><path d="M570.1 370.3 V378.6 L578.4 374.4z" fill="#fbe7d8" stroke="#8b1414" stroke-width="1.1"/><path d="M576.50 369.50 L578.40 370.30 L578.40 378.60 L580.30 379.40" fill="none" stroke="#8b1414" stroke-width="1.1"/><text x="570.00" y="368.80" font-family="Liberation Sans" font-size="6.8" fill="#6a6a6a" text-anchor="start" >D3</text><text x="569.50" y="385.00" font-family="Liberation Sans" font-size="6.5" fill="#6a6a6a" text-anchor="start" >BAS21</text><text x="549.40" y="390.00" font-family="Liberation Sans" font-size="6.8" fill="#6a6a6a" text-anchor="start" >U3</text><path d="M532.80 399.80 L549.40 399.80" fill="none" stroke="#c86464" stroke-width="1.3"/><path d="M600.30 399.80 L617.10 399.80" fill="none" stroke="#c86464" stroke-width="1.3"/><path d="M479.00 399.80 L532.80 399.80" fill="none" stroke="#55a955" stroke-width="1.3"/><path d="M532.80 416.90 L549.40 416.90" fill="none" stroke="#c86464" stroke-width="1.3"/><path d="M600.30 416.90 L617.10 416.90" fill="none" stroke="#c86464" stroke-width="1.3"/><path d="M532.80 433.90 L549.40 433.90" fill="none" stroke="#c86464" stroke-width="1.3"/><path d="M600.30 433.90 L617.10 433.90" fill="none" stroke="#c86464" stroke-width="1.3"/><path d="M532.80 451.00 L549.40 451.00" fill="none" stroke="#c86464" stroke-width="1.3"/><path d="M600.30 451.00 L617.10 451.00" fill="none" stroke="#c86464" stroke-width="1.3"/><path d="M479.00 451.00 L532.80 451.00" fill="none" stroke="#8fdc8f" stroke-width="1.3"/><path d="M507.00 416.90 L532.80 416.90" fill="none" stroke="#8fdc8f" stroke-width="1.3"/><path d="M507.00 433.90 L532.80 433.90" fill="none" stroke="#8fdc8f" stroke-width="1.3"/><path d="M507 413.8 L512 416.9 L507 420z" fill="#55a955"/><path d="M507 430.8 L512 433.9 L507 437z" fill="#55a955"/><text x="507.50" y="414.50" font-family="Liberation Sans" font-size="5" fill="#3a9a3a" text-anchor="start" >PWM_CH</text><text x="507.50" y="431.50" font-family="Liberation Sans" font-size="5" fill="#3a9a3a" text-anchor="start" >PWM_CL</text><rect x="549.4" y="391.5" width="50.9" height="68.1" fill="#fbf7cf" stroke="#8b1414" stroke-width="1.3"/><path d="M574.00 421.00 L574.00 429.00" fill="none" stroke="#b0a080" stroke-width="0.6"/><path d="M570.00 425.00 L578.00 425.00" fill="none" stroke="#b0a080" stroke-width="0.6"/><text x="554.00" y="402.20" font-family="Liberation Sans" font-size="6.5" fill="#777" text-anchor="start" >VCC</text><text x="596.00" y="402.20" font-family="Liberation Sans" font-size="6.5" fill="#777" text-anchor="end" >VB</text><text x="554.00" y="419.30" font-family="Liberation Sans" font-size="6.5" fill="#777" text-anchor="start" >HIN</text><text x="596.00" y="419.30" font-family="Liberation Sans" font-size="6.5" fill="#777" text-anchor="end" >HO</text><text x="554.00" y="436.30" font-family="Liberation Sans" font-size="6.5" fill="#777" text-anchor="start" >LIN</text><text x="596.00" y="436.30" font-family="Liberation Sans" font-size="6.5" fill="#777" text-anchor="end" >VS</text><text x="554.00" y="453.40" font-family="Liberation Sans" font-size="6.5" fill="#777" text-anchor="start" >COM</text><text x="596.00" y="453.40" font-family="Liberation Sans" font-size="6.5" fill="#777" text-anchor="end" >LO</text><text x="549.00" y="466.50" font-family="Liberation Sans" font-size="6.5" fill="#6a6a6a" text-anchor="start" >IR2560S</text><path d="M617.10 399.80 L625.40 399.80" fill="none" stroke="#55a955" stroke-width="1.3"/><path d="M617.10 416.90 L650.40 416.90" fill="none" stroke="#55a955" stroke-width="1.3"/><path d="M617.10 433.90 L685.00 433.90 L685.00 425.60 L744.20 425.60" fill="none" stroke="#55a955" stroke-width="1.3"/><path d="M617.10 451.00 L650.40 451.00" fill="none" stroke="#55a955" stroke-width="1.3"/><circle cx="625.40" cy="399.80" r="2.3" fill="#2e8b2e"/><circle cx="625.40" cy="433.90" r="2.3" fill="#2e8b2e"/><rect x="619.1" y="412.5" width="12.9" height="2.6" fill="#8b1414"/><rect x="619.1" y="418.3" width="12.9" height="2.6" fill="#8b1414"/><text x="634.00" y="415.00" font-family="Liberation Sans" font-size="6.8" fill="#6a6a6a" text-anchor="start" >C6</text><text x="634.00" y="423.50" font-family="Liberation Sans" font-size="6.5" fill="#6a6a6a" text-anchor="start" >220nF</text><text x="634.00" y="431.50" font-family="Liberation Sans" font-size="6.5" fill="#6a6a6a" text-anchor="start" >50V</text><text x="481.00" y="423.00" font-family="Liberation Sans" font-size="6.8" fill="#6a6a6a" text-anchor="start" >C3</text><text x="481.00" y="432.00" font-family="Liberation Sans" font-size="6.5" fill="#6a6a6a" text-anchor="start" >220nF</text><text x="481.00" y="440.00" font-family="Liberation Sans" font-size="6.5" fill="#6a6a6a" text-anchor="start" >50V</text><path d="M650.40 417.00 L657.40 417.00" fill="none" stroke="#c86464" stroke-width="1.3"/><path d="M678.60 417.00 L685.40 417.00" fill="none" stroke="#c86464" stroke-width="1.3"/><rect x="657.40" y="413.40" width="21.2" height="7.2" fill="#fbf7cf" stroke="#8b1414" stroke-width="1.2" rx="0.8"/><path d="M660.40 417.00 L675.40 417.00" fill="none" stroke="#d8c8a0" stroke-width="0.8"/><text x="658.40" y="411.50" font-family="Liberation Sans" font-size="6.5" fill="#6a6a6a" text-anchor="start" >R5</text><text x="658.40" y="427.50" font-family="Liberation Sans" font-size="6.5" fill="#6a6a6a" text-anchor="start" >56&#937;</text><path d="M650.40 451.00 L657.40 451.00" fill="none" stroke="#c86464" stroke-width="1.3"/><path d="M678.60 451.00 L685.40 451.00" fill="none" stroke="#c86464" stroke-width="1.3"/><rect x="657.40" y="447.40" width="21.2" height="7.2" fill="#fbf7cf" stroke="#8b1414" stroke-width="1.2" rx="0.8"/><path d="M660.40 451.00 L675.40 451.00" fill="none" stroke="#d8c8a0" stroke-width="0.8"/><text x="658.40" y="445.50" font-family="Liberation Sans" font-size="6.5" fill="#6a6a6a" text-anchor="start" >R6</text><text x="658.40" y="461.50" font-family="Liberation Sans" font-size="6.5" fill="#6a6a6a" text-anchor="start" >56&#937;</text><path d="M685.40 417.00 L728.00 417.00" fill="none" stroke="#8fdc8f" stroke-width="1.3"/><path d="M685.40 451.00 L728.00 451.00" fill="none" stroke="#8fdc8f" stroke-width="1.3"/><text x="744.20" y="372.50" font-family="Liberation Sans" font-size="6.5" fill="#555" text-anchor="middle" >VSS</text><path d="M739.50 380.00 L744.20 375.00 L748.90 380.00" fill="none" stroke="#c86464" stroke-width="1.1"/><path d="M744.20 375.00 L744.20 392.00" fill="none" stroke="#c86464" stroke-width="1.1"/><path d="M744.20 381.00 L744.20 392.00" fill="none" stroke="#55a955" stroke-width="1.3"/><path d="M728.00 416.70 L735.50 416.70 L735.50 397.70" fill="none" stroke="#dc5a5a" stroke-width="1"/><path d="M738.50 396.70 L738.50 402.70" fill="none" stroke="#dc5a5a" stroke-width="1.2"/><path d="M738.50 405.20 L738.50 411.20" fill="none" stroke="#dc5a5a" stroke-width="1.2"/><path d="M738.50 413.70 L738.50 419.70" fill="none" stroke="#dc5a5a" stroke-width="1.2"/><path d="M738.50 399.70 L749.00 399.70 L749.00 416.70 L738.50 416.70" fill="none" stroke="#dc5a5a" stroke-width="0.9"/><path d="M738.50 408.20 L744.20 408.20" fill="none" stroke="#dc5a5a" stroke-width="0.9"/><path d="M739.5 408.20 L742.5 406.20 V410.20z" fill="#e8b090"/><path d="M746.5 410.20 H751.5 L749 406.20z" fill="#e8b090"/><path d="M744.20 399.70 L744.20 416.70" fill="none" stroke="#dc5a5a" stroke-width="1"/><circle cx="744.20" cy="399.70" r="1.5" fill="#dc5a5a"/><circle cx="744.20" cy="416.70" r="1.5" fill="#dc5a5a"/><text x="731.00" y="402.20" font-family="Liberation Sans" font-size="6.5" fill="#888" text-anchor="end" >Q5</text><text x="731.00" y="410.70" font-family="Liberation Sans" font-size="6" fill="#999" text-anchor="end" >PSMN5R8</text><path d="M728.00 450.70 L735.50 450.70 L735.50 431.70" fill="none" stroke="#dc5a5a" stroke-width="1"/><path d="M738.50 430.70 L738.50 436.70" fill="none" stroke="#dc5a5a" stroke-width="1.2"/><path d="M738.50 439.20 L738.50 445.20" fill="none" stroke="#dc5a5a" stroke-width="1.2"/><path d="M738.50 447.70 L738.50 453.70" fill="none" stroke="#dc5a5a" stroke-width="1.2"/><path d="M738.50 433.70 L749.00 433.70 L749.00 450.70 L738.50 450.70" fill="none" stroke="#dc5a5a" stroke-width="0.9"/><path d="M738.50 442.20 L744.20 442.20" fill="none" stroke="#dc5a5a" stroke-width="0.9"/><path d="M739.5 442.20 L742.5 440.20 V444.20z" fill="#e8b090"/><path d="M746.5 444.20 H751.5 L749 440.20z" fill="#e8b090"/><path d="M744.20 433.70 L744.20 450.70" fill="none" stroke="#dc5a5a" stroke-width="1"/><circle cx="744.20" cy="433.70" r="1.5" fill="#dc5a5a"/><circle cx="744.20" cy="450.70" r="1.5" fill="#dc5a5a"/><text x="731.00" y="436.20" font-family="Liberation Sans" font-size="6.5" fill="#888" text-anchor="end" >Q6</text><text x="731.00" y="444.70" font-family="Liberation Sans" font-size="6" fill="#999" text-anchor="end" >PSMN5R8</text><path d="M744.20 392.00 L744.20 399.70" fill="none" stroke="#dc5a5a" stroke-width="1"/><path d="M744.20 416.70 L744.20 433.70" fill="none" stroke="#55a955" stroke-width="1.3"/><path d="M744.20 450.70 L744.20 457.00" fill="none" stroke="#dc5a5a" stroke-width="1"/><circle cx="744.20" cy="425.60" r="2.4" fill="#22cc22"/><path d="M744.20 457.00 L744.20 484.90 L812.20 484.90" fill="none" stroke="#55a955" stroke-width="1.3"/><path d="M764.50 421.50 L772.50 429.50" fill="none" stroke="#d04848" stroke-width="1.1"/><path d="M772.50 421.50 L764.50 429.50" fill="none" stroke="#d04848" stroke-width="1.1"/><text x="774.00" y="428.00" font-family="Liberation Sans" font-size="6" fill="#aaa" text-anchor="start" >PHASE_C</text><text x="751.00" y="436.50" font-family="Liberation Sans" font-size="6" fill="#999" text-anchor="start" >PAD3</text><rect x="704.2" y="384.8" width="68.4" height="79.4" fill="rgba(110,170,240,0.2)" stroke="#9ec2f2" stroke-width="1.3" rx="1.5"/><path d="M812.10 360.30 L812.10 543.00" fill="none" stroke="#55a955" stroke-width="1.3"/><circle cx="812.20" cy="484.90" r="2.3" fill="#2e8b2e"/><path d="M479.00 501.70 L489.20 501.70" fill="none" stroke="#55a955" stroke-width="1.3"/><path d="M524.20 501.70 L626.80 501.70" fill="none" stroke="#55a955" stroke-width="1.3"/><path d="M622 499.20 L627 501.70 L622 504.20" fill="none" stroke="#55a955" stroke-width="1.1"/><text x="481.50" y="499.20" font-family="Liberation Sans" font-size="5.5" fill="#3a9a3a" text-anchor="start" >A</text><text x="591.30" y="499.20" font-family="Liberation Sans" font-size="5.5" fill="#3a9a3a" text-anchor="start" >V_PHASE_A</text><path d="M489.20 501.70 L496.20 501.70" fill="none" stroke="#c86464" stroke-width="1.3"/><path d="M517.40 501.70 L524.20 501.70" fill="none" stroke="#c86464" stroke-width="1.3"/><rect x="496.20" y="498.10" width="21.2" height="7.2" fill="#fbf7cf" stroke="#8b1414" stroke-width="1.2" rx="0.8"/><path d="M499.20 501.70 L514.20 501.70" fill="none" stroke="#d8c8a0" stroke-width="0.8"/><text x="497.20" y="496.20" font-family="Liberation Sans" font-size="6.5" fill="#6a6a6a" text-anchor="start" >R7</text><text x="497.20" y="512.20" font-family="Liberation Sans" font-size="6.5" fill="#6a6a6a" text-anchor="start" >47k&#937;</text><path d="M479.00 527.30 L489.20 527.30" fill="none" stroke="#55a955" stroke-width="1.3"/><path d="M524.20 527.30 L626.80 527.30" fill="none" stroke="#55a955" stroke-width="1.3"/><path d="M622 524.80 L627 527.30 L622 529.80" fill="none" stroke="#55a955" stroke-width="1.1"/><text x="481.50" y="524.80" font-family="Liberation Sans" font-size="5.5" fill="#3a9a3a" text-anchor="start" >B</text><text x="591.30" y="524.80" font-family="Liberation Sans" font-size="5.5" fill="#3a9a3a" text-anchor="start" >V_PHASE_B</text><path d="M489.20 527.30 L496.20 527.30" fill="none" stroke="#c86464" stroke-width="1.3"/><path d="M517.40 527.30 L524.20 527.30" fill="none" stroke="#c86464" stroke-width="1.3"/><rect x="496.20" y="523.70" width="21.2" height="7.2" fill="#fbf7cf" stroke="#8b1414" stroke-width="1.2" rx="0.8"/><path d="M499.20 527.30 L514.20 527.30" fill="none" stroke="#d8c8a0" stroke-width="0.8"/><text x="497.20" y="521.80" font-family="Liberation Sans" font-size="6.5" fill="#6a6a6a" text-anchor="start" >R8</text><text x="497.20" y="537.80" font-family="Liberation Sans" font-size="6.5" fill="#6a6a6a" text-anchor="start" >47k&#937;</text><path d="M479.00 552.70 L489.20 552.70" fill="none" stroke="#55a955" stroke-width="1.3"/><path d="M524.20 552.70 L626.80 552.70" fill="none" stroke="#55a955" stroke-width="1.3"/><path d="M622 550.20 L627 552.70 L622 555.20" fill="none" stroke="#55a955" stroke-width="1.1"/><text x="481.50" y="550.20" font-family="Liberation Sans" font-size="5.5" fill="#3a9a3a" text-anchor="start" >C</text><text x="591.30" y="550.20" font-family="Liberation Sans" font-size="5.5" fill="#3a9a3a" text-anchor="start" >V_PHASE_C</text><path d="M489.20 552.70 L496.20 552.70" fill="none" stroke="#c86464" stroke-width="1.3"/><path d="M517.40 552.70 L524.20 552.70" fill="none" stroke="#c86464" stroke-width="1.3"/><rect x="496.20" y="549.10" width="21.2" height="7.2" fill="#fbf7cf" stroke="#8b1414" stroke-width="1.2" rx="0.8"/><path d="M499.20 552.70 L514.20 552.70" fill="none" stroke="#d8c8a0" stroke-width="0.8"/><text x="497.20" y="547.20" font-family="Liberation Sans" font-size="6.5" fill="#6a6a6a" text-anchor="start" >R9</text><text x="497.20" y="563.20" font-family="Liberation Sans" font-size="6.5" fill="#6a6a6a" text-anchor="start" >47k&#937;</text><circle cx="583.00" cy="501.70" r="2.3" fill="#2e8b2e"/><circle cx="557.40" cy="527.30" r="2.3" fill="#2e8b2e"/><circle cx="532.00" cy="552.70" r="2.3" fill="#2e8b2e"/><path d="M532.00 552.70 L532.00 559.00" fill="none" stroke="#55a955" stroke-width="1.3"/><path d="M532.00 559.40 L532.00 567.40" fill="none" stroke="#c86464" stroke-width="1.3"/><path d="M532.00 588.20 L532.00 595.40" fill="none" stroke="#c86464" stroke-width="1.3"/><rect x="528.40" y="567.40" width="7.2" height="20.8" fill="#fbf7cf" stroke="#8b1414" stroke-width="1.2" rx="0.8"/><text x="526.50" y="577.90" font-family="Liberation Sans" font-size="6.5" fill="#6a6a6a" text-anchor="start" transform="rotate(-90 526.50 577.90)" text-anchor="middle">R12</text><text x="542.00" y="577.90" font-family="Liberation Sans" font-size="6.5" fill="#6a6a6a" text-anchor="start" transform="rotate(-90 542.00 577.90)" text-anchor="middle">6.8k&#937;</text><path d="M532.00 595.40 L532.00 605.00" fill="none" stroke="#8fdc8f" stroke-width="1.3"/><path d="M532.00 605.20 L532.00 612.20" fill="none" stroke="#c86464" stroke-width="1.3"/><path d="M525.00 612.20 L539.00 612.20" fill="none" stroke="#8b1414" stroke-width="1.5"/><text x="532.00" y="619.70" font-family="Liberation Sans" font-size="6" fill="#6a6a6a" text-anchor="middle" >GND</text><path d="M557.40 527.30 L557.40 559.00" fill="none" stroke="#55a955" stroke-width="1.3"/><path d="M557.40 559.40 L557.40 567.40" fill="none" stroke="#c86464" stroke-width="1.3"/><path d="M557.40 588.20 L557.40 595.40" fill="none" stroke="#c86464" stroke-width="1.3"/><rect x="553.80" y="567.40" width="7.2" height="20.8" fill="#fbf7cf" stroke="#8b1414" stroke-width="1.2" rx="0.8"/><text x="551.90" y="577.90" font-family="Liberation Sans" font-size="6.5" fill="#6a6a6a" text-anchor="start" transform="rotate(-90 551.90 577.90)" text-anchor="middle">R11</text><text x="567.40" y="577.90" font-family="Liberation Sans" font-size="6.5" fill="#6a6a6a" text-anchor="start" transform="rotate(-90 567.40 577.90)" text-anchor="middle">6.8k&#937;</text><path d="M557.40 595.40 L557.40 605.00" fill="none" stroke="#8fdc8f" stroke-width="1.3"/><path d="M557.40 605.20 L557.40 612.20" fill="none" stroke="#c86464" stroke-width="1.3"/><path d="M550.40 612.20 L564.40 612.20" fill="none" stroke="#8b1414" stroke-width="1.5"/><text x="557.40" y="619.70" font-family="Liberation Sans" font-size="6" fill="#6a6a6a" text-anchor="middle" >GND</text><path d="M583.00 501.70 L583.00 559.00" fill="none" stroke="#55a955" stroke-width="1.3"/><path d="M583.00 559.40 L583.00 567.40" fill="none" stroke="#c86464" stroke-width="1.3"/><path d="M583.00 588.20 L583.00 595.40" fill="none" stroke="#c86464" stroke-width="1.3"/><rect x="579.40" y="567.40" width="7.2" height="20.8" fill="#fbf7cf" stroke="#8b1414" stroke-width="1.2" rx="0.8"/><text x="577.50" y="577.90" font-family="Liberation Sans" font-size="6.5" fill="#6a6a6a" text-anchor="start" transform="rotate(-90 577.50 577.90)" text-anchor="middle">R10</text><text x="593.00" y="577.90" font-family="Liberation Sans" font-size="6.5" fill="#6a6a6a" text-anchor="start" transform="rotate(-90 593.00 577.90)" text-anchor="middle">6.8k&#937;</text><path d="M583.00 595.40 L583.00 605.00" fill="none" stroke="#8fdc8f" stroke-width="1.3"/><path d="M583.00 605.20 L583.00 612.20" fill="none" stroke="#c86464" stroke-width="1.3"/><path d="M576.00 612.20 L590.00 612.20" fill="none" stroke="#8b1414" stroke-width="1.5"/><text x="583.00" y="619.70" font-family="Liberation Sans" font-size="6" fill="#6a6a6a" text-anchor="middle" >GND</text><path d="M718.50 535.70 L769.00 535.70" fill="none" stroke="#55a955" stroke-width="1.3"/><path d="M804.00 535.70 L812.20 535.70" fill="none" stroke="#55a955" stroke-width="1.3"/><path d="M723 533 L718.5 535.7 L723 538.4" fill="none" stroke="#55a955" stroke-width="1.1"/><text x="724.00" y="533.00" font-family="Liberation Sans" font-size="5" fill="#3a9a3a" text-anchor="start" >V_CURRENT</text><path d="M769.00 535.70 L776.00 535.70" fill="none" stroke="#c86464" stroke-width="1.3"/><path d="M797.20 535.70 L804.00 535.70" fill="none" stroke="#c86464" stroke-width="1.3"/><rect x="776.00" y="532.10" width="21.2" height="7.2" fill="#fbf7cf" stroke="#8b1414" stroke-width="1.2" rx="0.8"/><path d="M779.00 535.70 L794.00 535.70" fill="none" stroke="#d8c8a0" stroke-width="0.8"/><text x="777.00" y="530.20" font-family="Liberation Sans" font-size="6.5" fill="#6a6a6a" text-anchor="start" >R27</text><text x="777.00" y="546.20" font-family="Liberation Sans" font-size="6.5" fill="#6a6a6a" text-anchor="start" >47k&#937;</text><circle cx="761.20" cy="535.70" r="2.3" fill="#2e8b2e"/><circle cx="812.20" cy="535.70" r="2.3" fill="#2e8b2e"/><path d="M761.20 535.70 L761.20 557.40" fill="none" stroke="#55a955" stroke-width="1.3"/><path d="M761.20 565.50 L761.20 588.00" fill="none" stroke="#8fdc8f" stroke-width="1.3"/><rect x="754.6" y="557.4" width="13.1" height="2.6" fill="#8b1414"/><rect x="754.6" y="563" width="13.1" height="2.6" fill="#8b1414"/><text x="770.00" y="558.50" font-family="Liberation Sans" font-size="6.5" fill="#6a6a6a" text-anchor="start" >C11</text><text x="770.00" y="568.00" font-family="Liberation Sans" font-size="6.5" fill="#6a6a6a" text-anchor="start" >100nF</text><path d="M761.20 588.20 L761.20 595.20" fill="none" stroke="#c86464" stroke-width="1.3"/><path d="M754.20 595.20 L768.20 595.20" fill="none" stroke="#8b1414" stroke-width="1.5"/><text x="761.20" y="602.70" font-family="Liberation Sans" font-size="6" fill="#6a6a6a" text-anchor="middle" >GND</text><path d="M812.20 543.00 L812.20 551.00" fill="none" stroke="#c86464" stroke-width="1.3"/><path d="M812.20 571.80 L812.20 579.00" fill="none" stroke="#c86464" stroke-width="1.3"/><rect x="808.60" y="551.00" width="7.2" height="20.8" fill="#fbf7cf" stroke="#8b1414" stroke-width="1.2" rx="0.8"/><text x="806.70" y="561.50" font-family="Liberation Sans" font-size="6.5" fill="#6a6a6a" text-anchor="start" transform="rotate(-90 806.70 561.50)" text-anchor="middle">R18</text><text x="822.20" y="561.50" font-family="Liberation Sans" font-size="6.5" fill="#6a6a6a" text-anchor="start" transform="rotate(-90 822.20 561.50)" text-anchor="middle">20m&#937;</text><path d="M812.20 578.80 L812.20 588.00" fill="none" stroke="#8fdc8f" stroke-width="1.3"/><path d="M812.20 588.20 L812.20 595.20" fill="none" stroke="#c86464" stroke-width="1.3"/><path d="M805.20 595.20 L819.20 595.20" fill="none" stroke="#8b1414" stroke-width="1.5"/><text x="812.20" y="602.70" font-family="Liberation Sans" font-size="6" fill="#6a6a6a" text-anchor="middle" >GND</text><path d="M489.30 638.50 L822.60 638.50" fill="none" stroke="#8b1414" stroke-width="2"/><path d="M489.30 672.30 L822.60 672.30" fill="none" stroke="#8b1414" stroke-width="2"/><path d="M478.60 688.70 L822.60 688.70" fill="none" stroke="#8b1414" stroke-width="2"/><path d="M723.00 655.30 L822.60 655.30" fill="none" stroke="#8b1414" stroke-width="2"/><path d="M489.30 638.50 L489.30 688.70" fill="none" stroke="#8b1414" stroke-width="2"/><path d="M723.00 638.50 L723.00 688.70" fill="none" stroke="#8b1414" stroke-width="2"/><text x="496.80" y="662.50" font-family="Liberation Sans" font-size="21" fill="#8b1414" text-anchor="start" >Brushless Controller</text><text x="496.80" y="684.00" font-family="Liberation Sans" font-size="11" fill="#8b1414" text-anchor="start" textLength="152" lengthAdjust="spacingAndGlyphs">Demo Brushless Controller Project</text><text x="729.90" y="649.60" font-family="Liberation Sans" font-size="10" fill="#8b1414" text-anchor="start" >04.02.17 01:07</text><text x="729.90" y="666.60" font-family="Liberation Sans" font-size="10" fill="#8b1414" text-anchor="start" >U. Bruhin</text><text x="729.90" y="683.70" font-family="Liberation Sans" font-size="10" fill="#8b1414" text-anchor="start" >Page 1/1</text></svg><svg class="r" style="left:770.50px;top:462.50px" width="14.0" height="20.0" viewBox="0 0 14 20"><path d="M1 1 V15.5 L4.6 12.2 L7.3 18.5 L9.8 17.4 L7.2 11.3 H12z" fill="#fff" stroke="#222" stroke-width="1.1" stroke-linejoin="round"/></svg><div class="r" style="left:825.40px;top:360.60px;width:11.60px;height:339.00px;background:#f2f1f0;"></div><div class="r" style="left:825.40px;top:360.60px;width:9.60px;height:337.00px;border:1px solid #cbc8c3;border-radius:6px;background:linear-gradient(90deg,#d9d8d5,#e6e5e3 50%,#d9d8d5);overflow:hidden"></div><div class="r" style="left:826.40px;top:361.60px;width:9.60px;height:11px;border-radius:5px 5px 0 0;background:#f8f8f7;border-bottom:1px solid #c9c6c1"></div><div class="r" style="left:826.40px;top:686.60px;width:9.60px;height:11px;border-radius:0 0 5px 5px;background:#f8f8f7;border-top:1px solid #c9c6c1"></div><svg class="r" style="left:827.20px;top:364.10px" width="8" height="7" viewBox="0 0 8 7"><path d="M1 5 H7 L4 1.5z" fill="#555"/></svg><svg class="r" style="left:827.20px;top:689.10px" width="8" height="7" viewBox="0 0 8 7"><path d="M1 1.5 H7 L4 5z" fill="#555"/></svg><div class="r" style="left:825.90px;top:507.00px;width:8.60px;height:24.00px;border:1px solid #b9b6b1;border-radius:6px;background:linear-gradient(90deg,#fbfbfa,#efeeec)"></div><svg class="r" style="left:827.20px;top:516.00px" width="8" height="8" viewBox="0 0 8 8"><path d="M2 1.5 H6 M2 4 H6 M2 6.5 H6" stroke="#aaa" stroke-width="0.8"/></svg><div class="r" style="left:479.00px;top:700.50px;width:345.60px;height:11.20px;background:#f2f1f0;"></div><div class="r" style="left:479.00px;top:700.50px;width:14.20px;height:9.20px;border:1px solid #c9c6c1;border-radius:6px 0 0 6px;background:#fafaf9"></div><svg class="r" style="left:483.50px;top:702.10px" width="7" height="8" viewBox="0 0 7 8"><path d="M5 1 V7 L1.5 4z" fill="#555"/></svg><div class="r" style="left:494.00px;top:700.50px;width:330.60px;height:9.20px;border:1px solid #c9c6c1;border-radius:6px;background:linear-gradient(#e4e3e1,#d4d3d0)"></div><div class="r" style="left:686.00px;top:700.5px;width:28px;height:9.2px;border:1px solid #c4c1bc;border-radius:6px;background:#eceae8"></div><div class="r" style="left:808px;top:700.5px;width:14.6px;height:9.2px;border:1px solid #c9c6c1;border-radius:0 6px 6px 0;background:#fafaf9"></div><svg class="r" style="left:815.00px;top:702.00px" width="7" height="8" viewBox="0 0 7 8"><path d="M2 1 V7 L5.5 4z" fill="#555"/></svg><div class="r" style="left:318.00px;top:712.00px;width:706.00px;height:1.00px;background:#d9d7d3;"></div><div class="t" style="left:843.90px;top:366.00px;font-size:13px;line-height:13px;color:#4a4a4a;">ERC [152]</div><svg class="r" style="left:1010.70px;top:366.50px" width="11" height="11" viewBox="0 0 11 11"><rect x="0.5" y="0.5" width="10" height="10" rx="1.5" fill="#f4f4f3" stroke="#8e8c88" stroke-width="0.9"/><rect x="2.5" y="4.5" width="4" height="4" fill="none" stroke="#444" stroke-width="0.9"/><path d="M4.5 4.5 V2.5 H8.5 V6.5 H6.5" fill="none" stroke="#444" stroke-width="0.9"/></svg><div class="r" style="left:842.30px;top:382.30px;width:167.30px;height:305.30px;background:#fff;box-sizing:border-box;border:1px solid #c3c0bb;"></div><div class="win" style="clip-path:inset(383.3px 15.399999999999977px 44.39999999999998px 843.3px);"><svg class="r" style="left:847.00px;top:386.80px" width="10" height="10"><path d="M1.5 3 H8.5 L5 7.5z" fill="#4c4c4c"/></svg><svg class="r" style="left:858.80px;top:384.70px" width="14" height="14" viewBox="0 0 14 14"><circle cx="7" cy="7" r="6.5" fill="#d01f1f"/><rect x="3" y="5.8" width="8" height="2.4" fill="#fff"/></svg><div class="t" style="left:878.80px;top:385.20px;font-size:13px;line-height:13px;color:#3c3c3c;">Circuit Errors (2)</div><div class="r" style="left:843.30px;top:400.10px;width:165.30px;height:16.80px;background:#eeeeee;"></div><div class="t" style="left:872.80px;top:402.00px;font-size:13px;line-height:13px;color:#3c3c3c;">Unconnected comp&#8230;</div><div class="t" style="left:872.80px;top:418.80px;font-size:13px;line-height:13px;color:#3c3c3c;">Unconnected comp&#8230;</div><div class="r" style="left:843.30px;top:433.70px;width:165.30px;height:16.80px;background:#eeeeee;"></div><svg class="r" style="left:847.00px;top:437.20px" width="10" height="10"><path d="M1.5 3 H8.5 L5 7.5z" fill="#4c4c4c"/></svg><svg class="r" style="left:858.80px;top:435.10px" width="14" height="14" viewBox="0 0 14 14"><path d="M7 1 L13.3 12.8 H0.7z" fill="#f0a030" stroke="#c77a10" stroke-width="0.7"/><path d="M7 5 V9.5" stroke="#fff" stroke-width="1.4"/><circle cx="7" cy="11" r="0.7" fill="#fff"/></svg><div class="t" style="left:878.80px;top:435.60px;font-size:13px;line-height:13px;color:#3c3c3c;">Circuit Warnings (5)</div><div class="t" style="left:872.80px;top:452.40px;font-size:13px;line-height:13px;color:#3c3c3c;">Net signal connecte&#8230;</div><div class="r" style="left:843.30px;top:467.30px;width:165.30px;height:16.80px;background:#eeeeee;"></div><div class="t" style="left:872.80px;top:469.20px;font-size:13px;line-height:13px;color:#3c3c3c;">Net signal connecte&#8230;</div><div class="t" style="left:872.80px;top:486.00px;font-size:13px;line-height:13px;color:#3c3c3c;">Net signal connecte&#8230;</div><div class="r" style="left:843.30px;top:500.90px;width:165.30px;height:16.80px;background:#eeeeee;"></div><div class="t" style="left:872.80px;top:502.80px;font-size:13px;line-height:13px;color:#3c3c3c;">Net signal connecte&#8230;</div><div class="t" style="left:872.80px;top:519.60px;font-size:13px;line-height:13px;color:#3c3c3c;">Net signal connecte&#8230;</div><div class="r" style="left:843.30px;top:534.50px;width:165.30px;height:16.80px;background:#eeeeee;"></div><svg class="r" style="left:847.00px;top:538.00px" width="10" height="10"><path d="M1.5 3 H8.5 L5 7.5z" fill="#4c4c4c"/></svg><svg class="r" style="left:858.80px;top:535.90px" width="14" height="14" viewBox="0 0 14 14"><circle cx="7" cy="7" r="6.5" fill="#d01f1f"/><rect x="3" y="5.8" width="8" height="2.4" fill="#fff"/></svg><div class="t" style="left:878.80px;top:536.40px;font-size:13px;line-height:13px;color:#3c3c3c;">Schematic Errors (2)</div><div class="t" style="left:872.80px;top:553.20px;font-size:13px;line-height:13px;color:#3c3c3c;">Unconnected pin: "2&#8230;</div><div class="r" style="left:843.30px;top:568.10px;width:165.30px;height:16.80px;background:#eeeeee;"></div><div class="t" style="left:872.80px;top:570.00px;font-size:13px;line-height:13px;color:#3c3c3c;">Unconnected pin: "&#8230;</div><svg class="r" style="left:858.80px;top:586.30px" width="14" height="14" viewBox="0 0 14 14"><path d="M7 1 L13.3 12.8 H0.7z" fill="#f0a030" stroke="#c77a10" stroke-width="0.7"/><path d="M7 5 V9.5" stroke="#fff" stroke-width="1.4"/><circle cx="7" cy="11" r="0.7" fill="#fff"/></svg><div class="t" style="left:878.80px;top:586.80px;font-size:13px;line-height:13px;color:#3c3c3c;">Schematic Warning&#8230;</div><div class="r" style="left:843.30px;top:601.70px;width:165.30px;height:16.80px;background:#eeeeee;"></div><svg class="r" style="left:847.00px;top:605.20px" width="10" height="10"><path d="M1.5 3 H8.5 L5 7.5z" fill="#4c4c4c"/></svg><svg class="r" style="left:858.80px;top:603.10px" width="14" height="14" viewBox="0 0 14 14"><circle cx="7" cy="7" r="6.5" fill="#d01f1f"/><rect x="3" y="5.8" width="8" height="2.4" fill="#fff"/></svg><div class="t" style="left:878.80px;top:603.60px;font-size:13px;line-height:13px;color:#3c3c3c;">Board Errors (143)</div><div class="t" style="left:872.80px;top:620.40px;font-size:13px;line-height:13px;color:#3c3c3c;">Dead net point in b&#8230;</div><div class="r" style="left:843.30px;top:635.30px;width:165.30px;height:16.80px;background:#eeeeee;"></div><div class="t" style="left:872.80px;top:637.20px;font-size:13px;line-height:13px;color:#3c3c3c;">Unplaced Compone&#8230;</div><div class="t" style="left:872.80px;top:654.00px;font-size:13px;line-height:13px;color:#3c3c3c;">Unplaced Compone&#8230;</div><div class="r" style="left:843.30px;top:668.90px;width:165.30px;height:16.80px;background:#eeeeee;"></div><div class="t" style="left:872.80px;top:670.80px;font-size:13px;line-height:13px;color:#3c3c3c;">Unplaced Compone&#8230;</div></div><div class="r" style="left:1012.80px;top:382.30px;width:11.20px;height:305.30px;background:#f2f1f0;"></div><div class="r" style="left:1012.80px;top:382.30px;width:9.20px;height:303.30px;border:1px solid #cbc8c3;border-radius:6px;background:linear-gradient(90deg,#d9d8d5,#e6e5e3 50%,#d9d8d5);overflow:hidden"></div><div class="r" style="left:1013.80px;top:383.30px;width:9.20px;height:11px;border-radius:5px 5px 0 0;background:#f8f8f7;border-bottom:1px solid #c9c6c1"></div><div class="r" style="left:1013.80px;top:674.60px;width:9.20px;height:11px;border-radius:0 0 5px 5px;background:#f8f8f7;border-top:1px solid #c9c6c1"></div><svg class="r" style="left:1014.40px;top:385.80px" width="8" height="7" viewBox="0 0 8 7"><path d="M1 5 H7 L4 1.5z" fill="#555"/></svg><svg class="r" style="left:1014.40px;top:677.10px" width="8" height="7" viewBox="0 0 8 7"><path d="M1 1.5 H7 L4 5z" fill="#555"/></svg><div class="r" style="left:1013.30px;top:395.00px;width:8.20px;height:28.00px;border:1px solid #b9b6b1;border-radius:6px;background:linear-gradient(90deg,#fbfbfa,#efeeec)"></div><svg class="r" style="left:1014.40px;top:406.00px" width="8" height="8" viewBox="0 0 8 8"><path d="M2 1.5 H6 M2 4 H6 M2 6.5 H6" stroke="#aaa" stroke-width="0.8"/></svg><div class="r" style="left:843.50px;top:689.60px;width:176.70px;height:18.90px;border:1px solid #bcb9b3;border-radius:3px;background:linear-gradient(#fbfbfa,#ebeae8);background:linear-gradient(#f3f3f2,#e9e8e6);border-color:#cfccc7;"></div><div class="t" style="left:932.80px;top:693.80px;font-size:13px;line-height:13px;color:#a7a5a1;transform:translateX(-50%);">Ignore Selected Item</div></div></body></html>
